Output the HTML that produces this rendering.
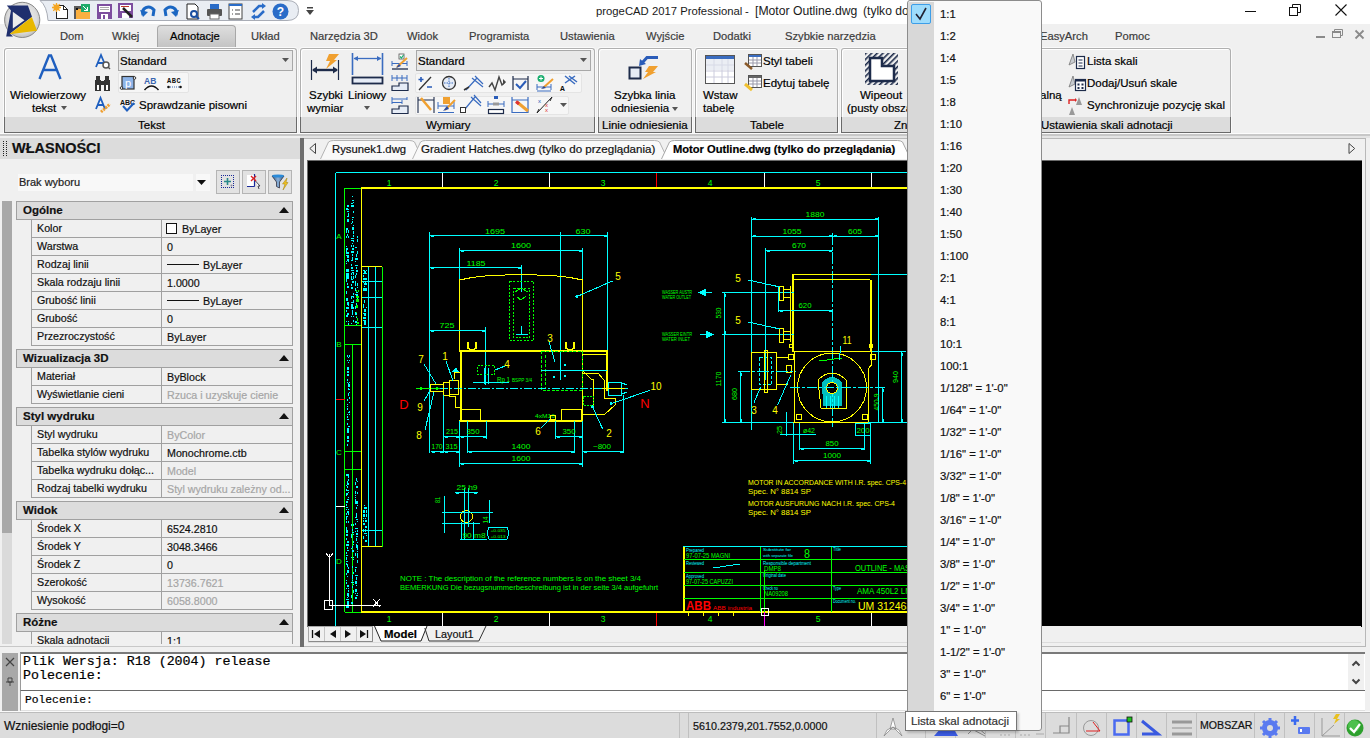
<!DOCTYPE html>
<html><head><meta charset="utf-8">
<style>
*{margin:0;padding:0;box-sizing:border-box}
html,body{width:1370px;height:738px;overflow:hidden;background:#f0f0f0;font-family:"Liberation Sans",sans-serif;font-size:11.5px;color:#000}
.t,.tab,.rt{-webkit-text-stroke:0.2px currentColor}
.a{position:absolute}
.t{position:absolute;white-space:nowrap;line-height:1}
.tab{position:absolute;top:31px;font-size:11.2px;color:#3c3c3c;white-space:nowrap;line-height:1}
.pnl{position:absolute;top:48px;height:85px;background:#f0f0f0;border:1px solid #b0b0b0;border-bottom-color:#6a6a6a;border-radius:3px 3px 0 0;box-shadow:inset 1px 1px #fff,0 0 0 1px #fafafa}
.pnl .lb{position:absolute;left:-1px;right:-1px;bottom:-1px;height:16px;background:#dcdcdc;border:1px solid #6a6a6a;border-top:none}
.rt{position:absolute;white-space:nowrap;line-height:1;font-size:11.5px;color:#000}
svg{position:absolute;overflow:visible}
</style></head><body>
<!-- ===== TITLE BAR ===== -->
<div class="a" style="left:0;top:0;width:1370px;height:24px;background:#fff"></div>
<div class="a" style="left:0;top:24px;width:1370px;height:24px;background:#f0f0f0"></div>
<!-- QAT -->
<svg style="left:0;top:0" width="320" height="24" viewBox="0 0 320 24"><path d="M40 0.5 H287 Q298.5 0.5 298.5 10.5 Q298.5 20.5 287 20.5 H48 Q47 6 40 0.5 Z" fill="#e9edf3" stroke="#a9adb6" stroke-width="1"/></svg>
<svg style="left:0;top:0" width="48" height="42" viewBox="0 0 48 42">
 <defs><radialGradient id="ab" cx="50%" cy="45%" r="55%"><stop offset="0" stop-color="#f4f4f4"/><stop offset="0.75" stop-color="#dcdcdc"/><stop offset="1" stop-color="#bdbdbd"/></radialGradient></defs>
 <circle cx="22.2" cy="19.9" r="17.6" fill="url(#ab)" stroke="#8a8a8a" stroke-width="1"/>
 <path d="M6.8 5.4 L27.9 5.4 L32 16.8 L10 33.5 L13 36.6 H6.2 L11 10.5 Z" fill="#1f2f6e"/>
 <path d="M12.8 11.7 L24.5 20.2 L12.8 28.5 Z" fill="#ececec"/>
 <path d="M31.9 17.1 L37 30.8 L9.4 34.2 Z" fill="#e8b800"/>
</svg>

<!-- qat icons -->
<svg style="left:45px;top:0" width="95" height="24" viewBox="0 0 95 24" shape-rendering="crispEdges">
 <path d="M11.5 5.5 H18.5 L22.5 9.5 V18.5 H11.5 Z" fill="#fff" stroke="#222"/>
 <path d="M18.5 5.5 V9.5 H22.5" fill="none" stroke="#222"/>
 <g shape-rendering="geometricPrecision"><circle cx="11.5" cy="7.5" r="3" fill="#f5a623"/><path d="M11.5 3 V12 M7 7.5 H16 M8.3 4.3 L14.7 10.7 M14.7 4.3 L8.3 10.7" stroke="#f5a623" stroke-width="1.3"/></g>
 <rect x="29" y="6" width="16" height="13" fill="#595959"/>
 <rect x="31" y="9" width="14" height="10" fill="#fbb040"/>
 <rect x="31" y="8" width="2" height="2" fill="#111"/>
 <rect x="36" y="4" width="9" height="8" fill="#1faa6a"/>
 <path d="M38 6 L42 10 M42 7 V10 H39" stroke="#fff" fill="none"/>
 <rect x="52" y="4" width="15" height="15" fill="#7d4e9f"/>
 <rect x="54" y="6" width="11" height="6" fill="#fff"/>
 <rect x="55" y="7" width="9" height="1" fill="#aaa"/><rect x="55" y="9" width="9" height="1" fill="#aaa"/>
 <rect x="56" y="14" width="7" height="5" fill="#fff"/><rect x="58" y="15" width="2" height="4" fill="#7d4e9f"/>
 <rect x="73" y="3" width="15" height="15" fill="#7d4e9f"/>
 <rect x="75" y="5" width="11" height="6" fill="#fff"/>
 <rect x="76" y="6" width="8" height="1" fill="#c0392b"/>
 <rect x="77" y="13" width="7" height="5" fill="#fff"/>
 <path d="M78 8 L87 17" stroke="#222" stroke-width="2.5" shape-rendering="geometricPrecision"/>
</svg>
<svg style="left:140px;top:4px" width="17" height="14" viewBox="0 0 17 14"><path d="M3 11 C1 4 9 0 14 6 L13 12" stroke="#1a66c2" stroke-width="3" fill="none"/><path d="M0 6 L3 13 L8 8 Z" fill="#1a66c2"/></svg>
<svg style="left:162px;top:4px" width="17" height="14" viewBox="0 0 17 14"><path d="M14 11 C16 4 8 0 3 6 L4 12" stroke="#1a66c2" stroke-width="3" fill="none"/><path d="M17 6 L14 13 L9 8 Z" fill="#1a66c2"/></svg>
<svg style="left:186px;top:3px" width="15" height="17" viewBox="0 0 15 17"><path d="M1 1 H9 L12 4 V16 H1 Z" fill="#fff" stroke="#222"/><circle cx="8" cy="11" r="3" fill="none" stroke="#1a4fa0" stroke-width="2"/><path d="M10 13 L13 16" stroke="#1a4fa0" stroke-width="2"/></svg>
<svg style="left:206px;top:3px" width="17" height="17" viewBox="0 0 17 17"><rect x="4" y="1" width="9" height="5" fill="#2a6cc8"/><rect x="1" y="6" width="15" height="7" rx="1" fill="#555"/><rect x="4" y="11" width="9" height="5" fill="#fff" stroke="#666"/></svg>
<svg style="left:228px;top:3px" width="15" height="17" viewBox="0 0 15 17"><rect x="1" y="1" width="13" height="15" fill="#fff" stroke="#444"/><rect x="1" y="1" width="13" height="2" fill="#2a6cc8"/><path d="M4 7 H5 M7 7 H12 M4 11 H5 M7 11 H12" stroke="#444"/></svg>
<svg style="left:250px;top:3px" width="17" height="17" viewBox="0 0 17 17"><path d="M3 9 L9 3 H13" stroke="#2a6cc8" stroke-width="2.5" fill="none"/><path d="M12 0 L16 3 L12 6 Z" fill="#2a6cc8"/><path d="M14 8 L8 14 H4" stroke="#2a6cc8" stroke-width="2.5" fill="none"/><path d="M5 11 L1 14 L5 17 Z" fill="#2a6cc8"/></svg>
<svg style="left:272px;top:3px" width="17" height="17" viewBox="0 0 17 17"><circle cx="8.5" cy="8.5" r="8" fill="#2a6cc8"/><text x="8.5" y="13" font-family="Liberation Sans" font-weight="bold" font-size="12" fill="#fff" text-anchor="middle">?</text></svg>
<svg style="left:306px;top:7px" width="8" height="9" viewBox="0 0 8 9"><rect x="1" y="0" width="6" height="1.5" fill="#444"/><path d="M0 3 H8 L4 8 Z" fill="#444"/></svg>
<div class="t" style="left:596px;top:5.5px;font-size:11.3px;color:#1a1a1a;-webkit-text-stroke:0">progeCAD 2017 Professional</div><div class="t" style="left:745px;top:5.5px;font-size:11.3px;color:#1a1a1a;-webkit-text-stroke:0">-</div><div class="t" style="left:755px;top:5px;font-size:12.2px;color:#1a1a1a;-webkit-text-stroke:0">[Motor Outline.dwg</div><div class="t" style="left:863px;top:5px;font-size:12.1px;color:#1a1a1a;-webkit-text-stroke:0">(tylko do przeglądania)]</div>
<!-- window controls -->
<div class="a" style="left:1245px;top:11px;width:11px;height:1px;background:#111"></div>
<svg style="left:1289px;top:4px" width="12" height="12" viewBox="0 0 12 12"><rect x="0.5" y="3.5" width="8" height="8" fill="none" stroke="#111"/><path d="M3.5 3.5 V0.5 H11.5 V8.5 H8.5" fill="none" stroke="#111"/></svg>
<svg style="left:1335px;top:4px" width="12" height="12" viewBox="0 0 12 12"><path d="M0.5 0.5 L11.5 11.5 M11.5 0.5 L0.5 11.5" stroke="#111" stroke-width="1.1"/></svg>

<!-- ===== RIBBON TABS ===== -->

<div class="a" style="left:157px;top:25px;width:79px;height:22px;background:linear-gradient(#dedede,#c4c4c4);border:1px solid #a8a8a8;border-bottom:none;border-radius:4px 4px 0 0"></div>
<div class="tab" style="left:60px">Dom</div>
<div class="tab" style="left:112px">Wklej</div>
<div class="tab" style="left:170px;color:#000">Adnotacje</div>
<div class="tab" style="left:251px">Układ</div>
<div class="tab" style="left:310px">Narzędzia 3D</div>
<div class="tab" style="left:407px">Widok</div>
<div class="tab" style="left:469px">Programista</div>
<div class="tab" style="left:560px">Ustawienia</div>
<div class="tab" style="left:646px">Wyjście</div>
<div class="tab" style="left:713px">Dodatki</div>
<div class="tab" style="left:785px">Szybkie narzędzia</div>
<div class="tab" style="left:1040px">EasyArch</div>
<div class="tab" style="left:1115px">Pomoc</div>
<!-- mdi controls -->
<div class="a" style="left:1316px;top:36px;width:9px;height:2px;background:#8a8a8a"></div>
<svg style="left:1332px;top:29px" width="11" height="9" viewBox="0 0 11 9"><rect x="0.5" y="2.5" width="8" height="6" fill="none" stroke="#8a8a8a"/><rect x="0.5" y="2.5" width="8" height="1.5" fill="#8a8a8a"/><path d="M2.5 2.5 V0.5 H10.5 V6.5 H8.5" fill="none" stroke="#8a8a8a"/></svg>
<svg style="left:1355px;top:30px" width="9" height="9" viewBox="0 0 9 9"><path d="M0.5 0.5 L8.5 8.5 M8.5 0.5 L0.5 8.5" stroke="#8a8a8a" stroke-width="1.8"/></svg>
<!-- ===== RIBBON BODY ===== -->
<div class="a" style="left:0;top:133px;width:1370px;height:1px;background:#fcfcfc"></div>
<div class="a" style="left:0;top:134px;width:1370px;height:2px;background:#c8c8c8"></div>
<div class="a" style="left:0;top:136px;width:1370px;height:2px;background:#e4e4e4"></div>
<!-- Tekst panel -->
<div class="pnl" style="left:4px;width:293px"><div class="lb"></div></div>
<div class="rt" style="left:138px;top:120px">Tekst</div>
<svg style="left:38px;top:54px" width="24" height="26" viewBox="0 0 24 26"><path d="M1.5 25 L11 1.5 H13 L22.5 25 M5.5 16 H18.5" stroke="#1f5fbf" stroke-width="2.4" fill="none"/></svg>
<div class="rt" style="left:10px;top:90px">Wielowierzowy</div>
<div class="rt" style="left:32px;top:103px">tekst</div>
<svg style="left:61px;top:106px" width="6" height="4"><path d="M0 0 H6 L3 4 Z" fill="#555"/></svg>
<svg style="left:95px;top:54px" width="16" height="15" viewBox="0 0 16 15"><path d="M1 13 L6 1 L11 13 M3 9 H9" stroke="#1f5fbf" stroke-width="1.8" fill="none"/><circle cx="11" cy="11" r="3" fill="#fff" stroke="#555" stroke-width="1.5"/><path d="M13 13 L15 15" stroke="#555" stroke-width="1.5"/></svg>
<svg style="left:94px;top:75px" width="17" height="16" viewBox="0 0 17 16"><rect x="1" y="5" width="6" height="11" fill="#333"/><rect x="10" y="5" width="6" height="11" fill="#333"/><rect x="2" y="1" width="4" height="4" fill="#333"/><rect x="11" y="1" width="4" height="4" fill="#333"/><rect x="6" y="6" width="5" height="4" fill="#333"/><rect x="3" y="10" width="2" height="5" fill="#fff"/><rect x="12" y="10" width="2" height="5" fill="#fff"/></svg>
<svg style="left:95px;top:97px" width="17" height="16" viewBox="0 0 17 16"><path d="M1 12 L5.5 1 L10 12 M3 8 H8" stroke="#1f5fbf" stroke-width="1.8" fill="none"/><path d="M6 15 L15 7" stroke="#f0a030" stroke-width="3" stroke-dasharray="2 1"/></svg>
<div class="a" style="left:118px;top:50px;width:175px;height:21px;background:#e8e8e8;border:1px solid #a8a8a8"></div>
<div class="rt" style="left:120px;top:56px">Standard</div>
<svg style="left:282px;top:58px" width="7" height="4"><path d="M0 0 H7 L3.5 4 Z" fill="#555"/></svg>
<div class="a" style="left:118px;top:72px;width:71px;height:21px;background:#f6f6f6;border:1px solid #e4e4e4;border-radius:2px"></div>
<svg style="left:120px;top:75px" width="16" height="16" viewBox="0 0 16 16"><rect x="2" y="1.5" width="12" height="12.5" fill="#8db4e8" stroke="#333" stroke-width="1.2"/><text x="8" y="11.5" font-family="Liberation Sans" font-size="11" fill="#fff" text-anchor="middle">p</text><circle cx="1.5" cy="13" r="1.3" fill="#fff" stroke="#333"/><circle cx="14.5" cy="3" r="1.3" fill="#fff" stroke="#333"/></svg>
<svg style="left:143px;top:75px" width="17" height="16" viewBox="0 0 17 16"><text x="1" y="9" font-family="Liberation Sans" font-weight="bold" font-size="8.5" fill="#3a66b0">AB</text><path d="M1.5 15 Q8.5 7 15.5 15" stroke="#111" stroke-width="1.4" fill="none"/></svg>
<svg style="left:166px;top:75px" width="18" height="16" viewBox="0 0 18 16"><text x="1" y="8" font-family="Liberation Mono" font-weight="bold" font-size="7" fill="#111" letter-spacing="0.5">ABC</text><circle cx="2.5" cy="12" r="1.3" fill="#111"/><circle cx="14.5" cy="12" r="1.3" fill="#111"/><path d="M4 12 H13" stroke="#3a66b0" stroke-dasharray="1 1"/></svg>
<svg style="left:120px;top:98px" width="16" height="14" viewBox="0 0 16 14"><text x="0" y="6.5" font-family="Liberation Sans" font-weight="bold" font-size="7" fill="#111">ABC</text><path d="M3 8 L7 12.5 L14 5" stroke="#1f5fbf" stroke-width="2" fill="none"/></svg>
<div class="rt" style="left:139px;top:100px">Sprawdzanie pisowni</div>

<!-- Wymiary panel -->
<div class="pnl" style="left:300px;width:295px"><div class="lb"></div></div>
<div class="rt" style="left:426px;top:120px">Wymiary</div>
<svg style="left:310px;top:53px" width="30" height="30" viewBox="0 0 30 30"><path d="M1.5 7 V27 M28.5 7 V27" stroke="#1d2b4a" stroke-width="1.2"/><path d="M3 17 H27" stroke="#1d2b4a" stroke-width="2.4"/><path d="M2 17 L7 13.5 V20.5 Z M28 17 L23 13.5 V20.5 Z" fill="#1d2b4a"/><path d="M19 1 H29 L24 7 H27 L16 16 L20 8 H16 Z" fill="#f0a030"/></svg>
<svg style="left:351px;top:53px" width="33" height="32" viewBox="0 0 33 32"><path d="M1.5 0 V22 M31.5 0 V22" stroke="#3a6cc0" stroke-width="1.6"/><path d="M3 5.5 H30" stroke="#3a6cc0" stroke-width="1.3"/><path d="M2.5 5.5 L7 3 V8 Z M30.5 5.5 L26 3 V8 Z" fill="#3a6cc0"/><rect x="1.5" y="24.5" width="30" height="6" fill="#e6ecf6" stroke="#1d2b4a" stroke-width="1.8"/></svg>
<div class="rt" style="left:309px;top:90px">Szybki</div>
<div class="rt" style="left:307px;top:103px">wymiar</div>
<div class="rt" style="left:348px;top:90px">Liniowy</div>
<svg style="left:364px;top:106px" width="6" height="4"><path d="M0 0 H6 L3 4 Z" fill="#555"/></svg>
<svg style="left:391px;top:53px" width="18" height="17" viewBox="0 0 18 17"><rect x="8" y="1" width="5" height="5" fill="#fff" stroke="#555" stroke-width="0.8"/><path d="M9 3.5 L10.5 5 L12.5 2" stroke="#1aae6f" stroke-width="1.2" fill="none"/><path d="M1 8 V13 M16 8 V13 M1 10.5 H16" stroke="#3a6cc0"/><path d="M1 16 H17" stroke="#1d2b4a" stroke-width="1.3"/><path d="M6 14 L16 5" stroke="#f0a030" stroke-width="2"/><path d="M5 15 L8 11 L10 13 Z" fill="#2a4ca0"/></svg>
<svg style="left:391px;top:74px" width="18" height="17" viewBox="0 0 18 17"><path d="M1 1 V7 M6 1 V7 M11 1 V7 M16 1 V7 M1 4 H16" stroke="#3a6cc0"/><path d="M1 16.5 H17 V9 H8 V12 H1 Z" fill="#e6ecf6" stroke="#1d2b4a" stroke-width="1.2"/></svg>
<svg style="left:391px;top:97px" width="18" height="17" viewBox="0 0 18 17"><path d="M1 0 V7 M16 0 V3 M11 3 V7 M1 2 H16 M1 5.5 H11" stroke="#3a6cc0"/><path d="M1 16.5 H17 V9 H8 V12 H1 Z" fill="#e6ecf6" stroke="#1d2b4a" stroke-width="1.2"/></svg>
<div class="a" style="left:416px;top:50px;width:175px;height:21px;background:#e8e8e8;border:1px solid #a8a8a8"></div>
<div class="rt" style="left:418px;top:56px">Standard</div>
<svg style="left:580px;top:58px" width="7" height="4"><path d="M0 0 H7 L3.5 4 Z" fill="#555"/></svg>
<div class="a" style="left:415px;top:73px;width:167px;height:20px;background:#f6f6f6;border:1px solid #e4e4e4;border-radius:2px"></div>
<div class="a" style="left:415px;top:96px;width:154px;height:19px;background:#f6f6f6;border:1px solid #e4e4e4;border-radius:2px"></div>
<svg style="left:417px;top:75px" width="170" height="40" viewBox="0 0 170 40">
 <!-- row1 -->
 <path d="M2 15 L14 2" stroke="#333" stroke-width="1.3"/><path d="M4 2 V7 M1.5 4.5 H6.5 M10 12 H15" stroke="#2a5cb8" stroke-width="1.6"/>
 <circle cx="32" cy="8" r="6.5" fill="#e6ecf6" stroke="#333" stroke-width="1.3"/><path d="M32 3 V13 M27 8 H37" stroke="#3a6cc0" stroke-dasharray="1.5 1"/>
 <path d="M49 15 L60 3 M55 3 L66 12 M58 1 L66 9" stroke="#3a6cc0" stroke-width="1.2"/><path d="M47 15 L52 12" stroke="#333" stroke-width="1.5"/>
 <path d="M72 12 L75 8 L78 15 L82 2 L85 10 L88 7" stroke="#444" stroke-width="1.4" fill="none"/><path d="M89 7 L86 4 V10 Z" fill="#444"/>
 <path d="M96 1 V15 M111 1 V15 M96 4 H111" stroke="#1d2b4a" stroke-width="1.2"/><path d="M99 9 L103 13 L109 6" stroke="#2a5cb8" stroke-width="2" fill="none"/>
 <path d="M120 9 V15 M134 9 V15 M120 12 H134 M120 16 H134" stroke="#3a6cc0"/><circle cx="124" cy="3.5" r="3.5" fill="#1aae6f"/><path d="M124 1.5 V5.5 M122 3.5 H126" stroke="#fff"/><path d="M126 13 L136 4" stroke="#f0a030" stroke-width="2"/><path d="M124 14 L127 11 L129 13 Z" fill="#2a4ca0"/>
 <path d="M148 1 L158 9 M152 1 L160 7 M148 8 L158 1" stroke="#3a6cc0" stroke-width="1.5"/><text x="143" y="16" font-family="Liberation Mono" font-weight="bold" font-size="8" fill="#111">A</text>
 <!-- row2 -->
 <path d="M1 22 V38 M17 22 V38 M1 25 H17" stroke="#1d2b4a" stroke-width="1.1"/><path d="M4 23 L14 35" stroke="#f0a030" stroke-width="2.5"/>
 <rect x="26" y="22" width="7" height="7" fill="#f0a030"/><path d="M21 27 V34 M37 27 V34 M21 31 H37 M21 37.5 H37" stroke="#3a6cc0"/><path d="M28 35 L38 25" stroke="#f0a030" stroke-width="2"/><path d="M26 36 L30 31 L32 34 Z" fill="#2a4ca0"/>
 <path d="M48 34 L58 22 M54 22 L64 31 M57 20 L64 28" stroke="#3a6cc0" stroke-width="1.2"/><rect x="43.5" y="32.5" width="5" height="5" fill="#fff" stroke="#333"/>
 <rect x="77" y="21" width="4" height="3" fill="#2a5cb8"/><path d="M71 26 V32 M87 26 V32 M71 29 H87" stroke="#3a6cc0"/><rect x="76" y="27.5" width="6" height="3" fill="#999"/><rect x="71.5" y="34.5" width="15" height="4" fill="#fff" stroke="#1d2b4a" stroke-width="1.2"/>
 <path d="M95 22 V38 M111 22 V38 M95 25 H111 M95 37.5 H111" stroke="#3a6cc0" stroke-width="1.2"/><path d="M100 27 L111 36" stroke="#f0a030" stroke-width="3"/><path d="M99 26.5 L102 29" stroke="#d33" stroke-width="3"/>
 <path d="M120 38 L135 22" stroke="#222" stroke-width="1"/><path d="M120 38 L122 34 M135 22 L133 26" stroke="#222"/><text x="121" y="28" font-family="Liberation Sans" font-size="6" fill="#2a5cb8">x</text><text x="128" y="37" font-family="Liberation Sans" font-size="6" fill="#d33">x</text><text x="128" y="32" font-family="Liberation Sans" font-size="6" fill="#d33">x</text>
 <path d="M143 28 H150 L146.5 32 Z" fill="#555"/>
</svg>

<!-- Linie odniesienia -->
<div class="pnl" style="left:598px;width:94px"><div class="lb"></div></div>
<div class="rt" style="left:602px;top:120px">Linie odniesienia</div>
<svg style="left:628px;top:56px" width="32" height="28" viewBox="0 0 32 28"><rect x="1.5" y="11.5" width="11" height="11" fill="#e6ecf6" stroke="#1d2b4a" stroke-width="2"/><path d="M30 1.5 H19 L14 7" stroke="#2a5cb8" stroke-width="3" fill="none"/><path d="M11 10 L12 3 L18 8 Z" fill="#2a5cb8"/><path d="M21 10 H30 L25 16 H28 L15 23 L20 16 H17 Z" fill="#f0a030"/></svg>
<div class="rt" style="left:614px;top:90px">Szybka linia</div>
<div class="rt" style="left:611px;top:103px">odniesienia</div>
<svg style="left:672px;top:107px" width="6" height="4"><path d="M0 0 H6 L3 4 Z" fill="#555"/></svg>

<!-- Tabele -->
<div class="pnl" style="left:695px;width:143px"><div class="lb"></div></div>
<div class="rt" style="left:750px;top:120px">Tabele</div>
<svg style="left:705px;top:55px" width="30" height="29" viewBox="0 0 30 29"><rect x="0.5" y="0.5" width="29" height="28" fill="#fff" stroke="#555"/><rect x="1" y="1" width="28" height="3" fill="#3a6cc0"/><path d="M1 10 H29 M1 16 H29 M1 22 H29 M9 4 V28 M17 4 V28 M23 4 V28" stroke="#ccd" /><rect x="1" y="4" width="28" height="11" fill="#dde3ec" opacity="0.6"/></svg>
<div class="rt" style="left:703px;top:90px">Wstaw</div>
<div class="rt" style="left:703px;top:103px">tabelę</div>
<svg style="left:744px;top:54px" width="19" height="17" viewBox="0 0 19 17"><rect x="4.5" y="0.5" width="13" height="12" fill="#fff" stroke="#555"/><rect x="5" y="1" width="12" height="2" fill="#3a6cc0"/><path d="M5 6 H17 M5 9 H17 M9 3 V12 M13 3 V12" stroke="#99a"/><path d="M1 9 L8 15" stroke="#8a5a2a" stroke-width="2.5"/></svg>
<svg style="left:744px;top:75px" width="19" height="17" viewBox="0 0 19 17"><rect x="4.5" y="0.5" width="13" height="12" fill="#fff" stroke="#555"/><rect x="5" y="1" width="12" height="2" fill="#666"/><path d="M5 6 H17 M5 9 H17 M9 3 V12 M13 3 V12" stroke="#99a"/><path d="M1 9 L8 15" stroke="#f0c030" stroke-width="3"/></svg>
<div class="rt" style="left:763px;top:56px">Styl tabeli</div>
<div class="rt" style="left:763px;top:78px">Edytuj tabelę</div>

<!-- Znaczniki (partial) -->
<div class="pnl" style="left:841px;width:150px"><div class="lb"></div></div>
<svg style="left:865px;top:53px" width="33" height="32" viewBox="0 0 33 32"><defs><pattern id="hp" width="4" height="4" patternUnits="userSpaceOnUse" patternTransform="rotate(45)"><rect width="1.6" height="4" fill="#1d2b4a"/></pattern></defs><rect x="0" y="0" width="33" height="32" fill="url(#hp)"/><path d="M5 5 H17 V13 H29 V28 H5 Z" fill="#fff" stroke="#1d2b4a" stroke-width="2.5"/></svg>
<div class="rt" style="left:860px;top:90px">Wipeout</div>
<div class="rt" style="left:847px;top:103px">(pusty obszar)</div>
<div class="rt" style="left:894px;top:120px">Znaczniki</div>
<!-- Ustawienia skali adnotacji -->
<div class="pnl" style="left:995px;width:236px"><div class="lb"></div></div>
<div class="rt" style="left:1041px;top:120px">Ustawienia skali adnotacji</div>
<div class="rt" style="left:1040px;top:90px">alną</div>
<svg style="left:1068px;top:53px" width="18" height="16" viewBox="0 0 18 16"><path d="M5 1 L7 9 L1 12 Z" fill="#c8ccd0" stroke="#777" stroke-width="0.8"/><rect x="8.5" y="3.5" width="8" height="12" fill="#fff" stroke="#1d2b4a" stroke-width="1.2"/><path d="M10.5 7 H14.5 M10.5 10 H14.5 M10.5 13 H14.5" stroke="#1d2b4a"/></svg>
<svg style="left:1068px;top:75px" width="18" height="16" viewBox="0 0 18 16"><path d="M5 1 L7 9 L1 12 Z" fill="#c8ccd0" stroke="#777" stroke-width="0.8"/><rect x="7.5" y="4.5" width="10" height="11" fill="#fff" stroke="#1d2b4a" stroke-width="1.2"/><rect x="7.5" y="4.5" width="10" height="2" fill="#1d2b4a"/><path d="M9.5 8.5 h2 v2 h-2z M13.5 8.5 h2 v2 h-2z M9.5 12 h2 v2 h-2z M13.5 12 h2 v2 h-2z" fill="#1d2b4a"/></svg>
<svg style="left:1067px;top:96px" width="18" height="20" viewBox="0 0 18 20"><path d="M2 8 V4 H8" stroke="#d22" stroke-width="1.4" fill="none"/><path d="M8 2 L10 4 L8 6 Z" fill="#d22"/><path d="M12 1 L15 9 L9 9 Z" fill="#999"/><path d="M5 11 L8 19 L2 19 Z" fill="#999"/></svg>
<div class="rt" style="left:1087px;top:56px">Lista skali</div>
<div class="rt" style="left:1087px;top:78px">Dodaj/Usuń skale</div>
<div class="rt" style="left:1087px;top:100px">Synchronizuje pozycję skal</div>
<!-- ===== PROPERTIES ===== -->
<div class="a" style="left:0;top:136px;width:300px;height:516px;background:#f0f0f0"></div>
<div class="a" style="left:0;top:138px;width:300px;height:21px;background:#dcdcdc"></div>
<div class="a" style="left:3px;top:141px;width:4px;height:15px;background:repeating-linear-gradient(#222 0 1px,transparent 1px 2px);-webkit-mask:repeating-linear-gradient(90deg,#000 0 1px,transparent 1px 3px)"></div>
<div class="t" style="left:12px;top:141px;font-size:14.5px;font-weight:bold;color:#111">WŁASNOŚCI</div>
<div class="a" style="left:18px;top:174px;width:175px;height:17px;background:#f8f8f8"></div>
<div class="a" style="left:196px;top:174px;width:14px;height:17px;background:#f8f8f8"></div>
<div class="t" style="left:19px;top:177px;font-size:11px;color:#222">Brak wyboru</div>
<svg style="left:197px;top:180px" width="9" height="5"><path d="M0 0 H9 L4.5 5 Z" fill="#111"/></svg>
<div class="a" style="left:216px;top:170px;width:24px;height:24px;background:#e2e2e2;border:1px solid #b4b4b4"></div>
<div class="a" style="left:242px;top:170px;width:24px;height:24px;background:#e2e2e2;border:1px solid #b4b4b4"></div>
<div class="a" style="left:268px;top:170px;width:24px;height:24px;background:#e2e2e2;border:1px solid #b4b4b4"></div>
<svg style="left:219px;top:173px" width="18" height="18" viewBox="0 0 18 18"><rect x="2" y="2" width="1" height="1" fill="#1a2a9a"/><rect x="2" y="14" width="1" height="1" fill="#1a2a9a"/><rect x="4" y="2" width="1" height="1" fill="#1a2a9a"/><rect x="4" y="14" width="1" height="1" fill="#1a2a9a"/><rect x="6" y="2" width="1" height="1" fill="#1a2a9a"/><rect x="6" y="14" width="1" height="1" fill="#1a2a9a"/><rect x="8" y="2" width="1" height="1" fill="#1a2a9a"/><rect x="8" y="14" width="1" height="1" fill="#1a2a9a"/><rect x="10" y="2" width="1" height="1" fill="#1a2a9a"/><rect x="10" y="14" width="1" height="1" fill="#1a2a9a"/><rect x="12" y="2" width="1" height="1" fill="#1a2a9a"/><rect x="12" y="14" width="1" height="1" fill="#1a2a9a"/><rect x="14" y="2" width="1" height="1" fill="#1a2a9a"/><rect x="14" y="14" width="1" height="1" fill="#1a2a9a"/><rect x="2" y="4" width="1" height="1" fill="#1a2a9a"/><rect x="14" y="4" width="1" height="1" fill="#1a2a9a"/><rect x="2" y="6" width="1" height="1" fill="#1a2a9a"/><rect x="14" y="6" width="1" height="1" fill="#1a2a9a"/><rect x="2" y="8" width="1" height="1" fill="#1a2a9a"/><rect x="14" y="8" width="1" height="1" fill="#1a2a9a"/><rect x="2" y="10" width="1" height="1" fill="#1a2a9a"/><rect x="14" y="10" width="1" height="1" fill="#1a2a9a"/><rect x="2" y="12" width="1" height="1" fill="#1a2a9a"/><rect x="14" y="12" width="1" height="1" fill="#1a2a9a"/><path d="M8.5 5 V12 M5 8.5 H12" stroke="#2a8a8a" stroke-width="1.6"/><circle cx="12.5" cy="12.5" r="1" fill="#889"/></svg>
<svg style="left:245px;top:173px" width="18" height="18" viewBox="0 0 18 18"><rect x="2" y="2" width="8" height="11" fill="#fff"/><path d="M2 13.5 H9.5 M9.5 1 V13.5" stroke="#1a2a9a" stroke-width="1.2"/><path d="M6 3 L11 8 M11 3 L6 8" stroke="#d22" stroke-width="1.4"/><path d="M10.5 8 L15 13 L13 13 L14 16" stroke="#334" fill="#fff" stroke-width="0.9"/></svg>
<svg style="left:271px;top:173px" width="18" height="18" viewBox="0 0 18 18"><defs><linearGradient id="fn" x1="0" x2="1"><stop offset="0" stop-color="#3a5a80"/><stop offset=".5" stop-color="#8ab0d8"/><stop offset="1" stop-color="#3a5a80"/></linearGradient></defs><path d="M1 3 H13 L8.5 9 V15 L5.5 13.5 V9 Z" fill="url(#fn)" stroke="#334" stroke-width="0.8"/><ellipse cx="7" cy="3" rx="6" ry="1.6" fill="#2a8ad8"/><path d="M12 17 L14 11 H11.5 L16 5 L15 9.5 H17 Z" fill="#f0c020" stroke="#a08010" stroke-width="0.5"/></svg>
<div class="a" style="left:2px;top:201px;width:10px;height:332px;background:#a8a8a8"></div>
<div class="a" style="left:2px;top:533px;width:10px;height:111px;background:#dadada"></div>
<div class="a" style="left:0;top:646px;width:300px;height:1px;background:#c8c8c8"></div>
<div class="a" style="left:0;top:0;width:300px;height:644px;overflow:hidden;clip-path:inset(195px 0 0 0)">
<div class="a" style="left:16px;top:201px;width:277px;height:19px;background:#dcdcdc;border:1px solid #a0a0a0"></div>
<div class="t" style="left:23px;top:205px;font-size:11.5px;font-weight:bold;color:#111">Ogólne</div>
<svg style="left:279px;top:207px" width="10" height="6"><path d="M0 6 H10 L5 0 Z" fill="#111"/></svg>
<div class="a" style="left:31px;top:219px;width:262px;height:19px;border:1px solid #a0a0a0;background:#f0f0f0"></div>
<div class="a" style="left:161px;top:219px;width:1px;height:19px;background:#a0a0a0"></div>
<div class="t" style="left:37px;top:223px;font-size:10.7px;color:#111">Kolor</div>
<div class="a" style="left:166px;top:223px;width:11px;height:11px;border:1px solid #111;background:#fff"></div>
<div class="t" style="left:182px;top:224px;font-size:10.7px;color:#111">ByLayer</div>
<div class="a" style="left:31px;top:237px;width:262px;height:19px;border:1px solid #a0a0a0;background:#f0f0f0"></div>
<div class="a" style="left:161px;top:237px;width:1px;height:19px;background:#a0a0a0"></div>
<div class="t" style="left:37px;top:241px;font-size:10.7px;color:#111">Warstwa</div>
<div class="t" style="left:167px;top:242px;font-size:10.7px;color:#111">0</div>
<div class="a" style="left:31px;top:255px;width:262px;height:19px;border:1px solid #a0a0a0;background:#f0f0f0"></div>
<div class="a" style="left:161px;top:255px;width:1px;height:19px;background:#a0a0a0"></div>
<div class="t" style="left:37px;top:259px;font-size:10.7px;color:#111">Rodzaj linii</div>
<div class="a" style="left:167px;top:264px;width:32px;height:1px;background:#111"></div>
<div class="t" style="left:203px;top:260px;font-size:10.7px;color:#111">ByLayer</div>
<div class="a" style="left:31px;top:273px;width:262px;height:19px;border:1px solid #a0a0a0;background:#f0f0f0"></div>
<div class="a" style="left:161px;top:273px;width:1px;height:19px;background:#a0a0a0"></div>
<div class="t" style="left:37px;top:277px;font-size:10.7px;color:#111">Skala rodzaju linii</div>
<div class="t" style="left:167px;top:278px;font-size:10.7px;color:#111">1.0000</div>
<div class="a" style="left:31px;top:291px;width:262px;height:19px;border:1px solid #a0a0a0;background:#f0f0f0"></div>
<div class="a" style="left:161px;top:291px;width:1px;height:19px;background:#a0a0a0"></div>
<div class="t" style="left:37px;top:295px;font-size:10.7px;color:#111">Grubość linii</div>
<div class="a" style="left:167px;top:300px;width:32px;height:1px;background:#111"></div>
<div class="t" style="left:203px;top:296px;font-size:10.7px;color:#111">ByLayer</div>
<div class="a" style="left:31px;top:309px;width:262px;height:19px;border:1px solid #a0a0a0;background:#f0f0f0"></div>
<div class="a" style="left:161px;top:309px;width:1px;height:19px;background:#a0a0a0"></div>
<div class="t" style="left:37px;top:313px;font-size:10.7px;color:#111">Grubość</div>
<div class="t" style="left:167px;top:314px;font-size:10.7px;color:#111">0</div>
<div class="a" style="left:31px;top:327px;width:262px;height:19px;border:1px solid #a0a0a0;background:#f0f0f0"></div>
<div class="a" style="left:161px;top:327px;width:1px;height:19px;background:#a0a0a0"></div>
<div class="t" style="left:37px;top:331px;font-size:10.7px;color:#111">Przezroczystość</div>
<div class="t" style="left:167px;top:332px;font-size:10.7px;color:#111">ByLayer</div>
<div class="a" style="left:16px;top:349px;width:277px;height:19px;background:#dcdcdc;border:1px solid #a0a0a0"></div>
<div class="t" style="left:23px;top:353px;font-size:11.5px;font-weight:bold;color:#111">Wizualizacja 3D</div>
<svg style="left:279px;top:355px" width="10" height="6"><path d="M0 6 H10 L5 0 Z" fill="#111"/></svg>
<div class="a" style="left:31px;top:367px;width:262px;height:19px;border:1px solid #a0a0a0;background:#f0f0f0"></div>
<div class="a" style="left:161px;top:367px;width:1px;height:19px;background:#a0a0a0"></div>
<div class="t" style="left:37px;top:371px;font-size:10.7px;color:#111">Materiał</div>
<div class="t" style="left:167px;top:372px;font-size:10.7px;color:#111">ByBlock</div>
<div class="a" style="left:31px;top:385px;width:262px;height:19px;border:1px solid #a0a0a0;background:#f0f0f0"></div>
<div class="a" style="left:161px;top:385px;width:1px;height:19px;background:#a0a0a0"></div>
<div class="t" style="left:37px;top:389px;font-size:10.7px;color:#111">Wyświetlanie cieni</div>
<div class="t" style="left:167px;top:390px;font-size:10.7px;color:#a6a6a6">Rzuca i uzyskuje cienie</div>
<div class="a" style="left:16px;top:407px;width:277px;height:19px;background:#dcdcdc;border:1px solid #a0a0a0"></div>
<div class="t" style="left:23px;top:411px;font-size:11.5px;font-weight:bold;color:#111">Styl wydruku</div>
<svg style="left:279px;top:413px" width="10" height="6"><path d="M0 6 H10 L5 0 Z" fill="#111"/></svg>
<div class="a" style="left:31px;top:425px;width:262px;height:19px;border:1px solid #a0a0a0;background:#f0f0f0"></div>
<div class="a" style="left:161px;top:425px;width:1px;height:19px;background:#a0a0a0"></div>
<div class="t" style="left:37px;top:429px;font-size:10.7px;color:#111">Styl wydruku</div>
<div class="t" style="left:167px;top:430px;font-size:10.7px;color:#a6a6a6">ByColor</div>
<div class="a" style="left:31px;top:443px;width:262px;height:19px;border:1px solid #a0a0a0;background:#f0f0f0"></div>
<div class="a" style="left:161px;top:443px;width:1px;height:19px;background:#a0a0a0"></div>
<div class="t" style="left:37px;top:447px;font-size:10.7px;color:#111">Tabelka stylów wydruku</div>
<div class="t" style="left:167px;top:448px;font-size:10.7px;color:#111">Monochrome.ctb</div>
<div class="a" style="left:31px;top:461px;width:262px;height:19px;border:1px solid #a0a0a0;background:#f0f0f0"></div>
<div class="a" style="left:161px;top:461px;width:1px;height:19px;background:#a0a0a0"></div>
<div class="t" style="left:37px;top:465px;font-size:10.7px;color:#111">Tabelka wydruku dołąc...</div>
<div class="t" style="left:167px;top:466px;font-size:10.7px;color:#a6a6a6">Model</div>
<div class="a" style="left:31px;top:479px;width:262px;height:19px;border:1px solid #a0a0a0;background:#f0f0f0"></div>
<div class="a" style="left:161px;top:479px;width:1px;height:19px;background:#a0a0a0"></div>
<div class="t" style="left:37px;top:483px;font-size:10.7px;color:#111">Rodzaj tabelki wydruku</div>
<div class="t" style="left:167px;top:484px;font-size:10.7px;color:#a6a6a6">Styl wydruku zależny od...</div>
<div class="a" style="left:16px;top:501px;width:277px;height:19px;background:#dcdcdc;border:1px solid #a0a0a0"></div>
<div class="t" style="left:23px;top:505px;font-size:11.5px;font-weight:bold;color:#111">Widok</div>
<svg style="left:279px;top:507px" width="10" height="6"><path d="M0 6 H10 L5 0 Z" fill="#111"/></svg>
<div class="a" style="left:31px;top:519px;width:262px;height:19px;border:1px solid #a0a0a0;background:#f0f0f0"></div>
<div class="a" style="left:161px;top:519px;width:1px;height:19px;background:#a0a0a0"></div>
<div class="t" style="left:37px;top:523px;font-size:10.7px;color:#111">Środek X</div>
<div class="t" style="left:167px;top:524px;font-size:10.7px;color:#111">6524.2810</div>
<div class="a" style="left:31px;top:537px;width:262px;height:19px;border:1px solid #a0a0a0;background:#f0f0f0"></div>
<div class="a" style="left:161px;top:537px;width:1px;height:19px;background:#a0a0a0"></div>
<div class="t" style="left:37px;top:541px;font-size:10.7px;color:#111">Środek Y</div>
<div class="t" style="left:167px;top:542px;font-size:10.7px;color:#111">3048.3466</div>
<div class="a" style="left:31px;top:555px;width:262px;height:19px;border:1px solid #a0a0a0;background:#f0f0f0"></div>
<div class="a" style="left:161px;top:555px;width:1px;height:19px;background:#a0a0a0"></div>
<div class="t" style="left:37px;top:559px;font-size:10.7px;color:#111">Środek Z</div>
<div class="t" style="left:167px;top:560px;font-size:10.7px;color:#111">0</div>
<div class="a" style="left:31px;top:573px;width:262px;height:19px;border:1px solid #a0a0a0;background:#f0f0f0"></div>
<div class="a" style="left:161px;top:573px;width:1px;height:19px;background:#a0a0a0"></div>
<div class="t" style="left:37px;top:577px;font-size:10.7px;color:#111">Szerokość</div>
<div class="t" style="left:167px;top:578px;font-size:10.7px;color:#a6a6a6">13736.7621</div>
<div class="a" style="left:31px;top:591px;width:262px;height:19px;border:1px solid #a0a0a0;background:#f0f0f0"></div>
<div class="a" style="left:161px;top:591px;width:1px;height:19px;background:#a0a0a0"></div>
<div class="t" style="left:37px;top:595px;font-size:10.7px;color:#111">Wysokość</div>
<div class="t" style="left:167px;top:596px;font-size:10.7px;color:#a6a6a6">6058.8000</div>
<div class="a" style="left:16px;top:613px;width:277px;height:19px;background:#dcdcdc;border:1px solid #a0a0a0"></div>
<div class="t" style="left:23px;top:617px;font-size:11.5px;font-weight:bold;color:#111">Różne</div>
<svg style="left:279px;top:619px" width="10" height="6"><path d="M0 6 H10 L5 0 Z" fill="#111"/></svg>
<div class="a" style="left:31px;top:631px;width:262px;height:19px;border:1px solid #a0a0a0;background:#f0f0f0"></div>
<div class="a" style="left:161px;top:631px;width:1px;height:19px;background:#a0a0a0"></div>
<div class="t" style="left:37px;top:635px;font-size:10.7px;color:#111">Skala adnotacji</div>
<div class="t" style="left:167px;top:636px;font-size:10.7px;color:#111">1:1</div>
</div>
<!-- ===== DOC AREA ===== -->
<div class="a" style="left:304px;top:138px;width:1062px;height:509px;background:#f0f0f0;border:1px solid #b8b8b8;border-left:none"></div>
<div class="a" style="left:300px;top:138px;width:4px;height:509px;background:#6e6e6e"></div>
<svg style="left:309px;top:143px" width="8" height="11" viewBox="0 0 8 11"><path d="M6.5 0.5 V10.5 L0.8 5.5 Z" fill="none" stroke="#444"/></svg>
<svg style="left:1348px;top:143px" width="8" height="11" viewBox="0 0 8 11"><path d="M1 0.5 V10.5 L6.7 5.5 Z" fill="none" stroke="#444"/></svg>
<svg style="left:0;top:0" width="1370" height="170" viewBox="0 0 1370 170">
<path d="M320.5 159 L328.5 142 Q330.5 140.5 333.5 140.5 H409.5 Q412.5 140.5 414.5 142 L422.5 159" fill="#f9f9f9" stroke="#b4b4b4" stroke-width="1"/>
<path d="M412.5 159 L420.5 142 Q422.5 140.5 425.5 140.5 H654.5 Q657.5 140.5 659.5 142 L667.5 159" fill="#f9f9f9" stroke="#b4b4b4" stroke-width="1"/>
<path d="M661.5 159 L669.5 142 Q671.5 140.5 674.5 140.5 H897.5 Q900.5 140.5 902.5 142 L910.5 159" fill="#ffffff" stroke="#a8a8a8" stroke-width="1"/>
</svg>
<div class="t" style="left:332px;top:144px;font-size:11.3px;color:#111">Rysunek1.dwg</div>
<div class="t" style="left:421px;top:144px;font-size:11.55px;color:#111">Gradient Hatches.dwg (tylko do przeglądania)</div>
<div class="t" style="left:673px;top:144px;font-size:11.15px;font-weight:bold;color:#000">Motor Outline.dwg (tylko do przeglądania)</div>
<div class="a" style="left:307px;top:160px;width:1055px;height:467px;background:#000;border-top:1px solid #6a6a6a;border-left:1px solid #6a6a6a"></div>
<div class="a" style="left:308px;top:626px;width:1053px;height:18px;background:#f0f0f0"></div>
<div class="a" style="left:308px;top:642px;width:1053px;height:1px;background:#dcdcdc"></div>
<svg style="left:308px;top:626px" width="200" height="18" viewBox="0 0 200 18"><rect x="0.5" y="0.5" width="64" height="15" fill="#f0f0f0" stroke="#a8a8a8"/><path d="M1 15.5 H64.5 V1" stroke="#8a8a8a" fill="none"/><path d="M16.5 1 V15 M32.5 1 V15 M48.5 1 V15" stroke="#c4c4c4"/><path d="M4.5 4 V12" stroke="#111" stroke-width="1.3"/><path d="M12 4 V12 L6 8 Z" fill="#111"/><path d="M28 4 V12 L22 8 Z" fill="#111"/><path d="M37 4 V12 L43 8 Z" fill="#111"/><path d="M52 4 V12 L58 8 Z" fill="#111"/><path d="M59.5 4 V12" stroke="#111" stroke-width="1.3"/><path d="M66.5 0 L73 15 H113 L119 0 Z" fill="#fff" stroke="none"/><path d="M66.5 0 L73 15 H113 L119 0" fill="none" stroke="#222" stroke-width="1"/><path d="M116.8 2 L121 15 H170.8 L178 0" fill="none" stroke="#333" stroke-width="1"/></svg>
<div class="t" style="left:384px;top:629px;font-size:11.4px;font-weight:bold;color:#000">Model</div>
<div class="t" style="left:435px;top:629px;font-size:10.8px;color:#111">Layout1</div>
<!-- ===== COMMAND ===== -->
<div class="a" style="left:0;top:647px;width:1370px;height:5px;background:#f0f0f0"></div>
<div class="a" style="left:0;top:652px;width:1366px;height:60px;background:#f0f0f0"></div>
<div class="a" style="left:2px;top:653px;width:16px;height:58px;background:#a8a8a8"></div>
<svg style="left:5px;top:657px" width="10" height="10" viewBox="0 0 10 10"><path d="M1 1 L9 9 M9 1 L1 9" stroke="#444" stroke-width="1.2"/></svg>
<svg style="left:6px;top:677px" width="8" height="9" viewBox="0 0 8 9"><path d="M2 1 H6 V5 H2 Z M0 5 H8 M4 5 V9" stroke="#444" fill="none"/></svg>
<div class="a" style="left:20px;top:652px;width:1345px;height:39px;background:#fff;border-top:2px solid #7a7a7a;border-left:1px solid #9a9a9a"></div>
<div class="a" style="left:20px;top:690px;width:1345px;height:21px;background:#fff;border-top:1px solid #6a6a6a;border-left:1px solid #9a9a9a;border-bottom:1px solid #e0e0e0"></div>
<div class="a" style="left:1348px;top:654px;width:16px;height:36px;background:#f0f0f0"></div>
<svg style="left:1351px;top:660px" width="10" height="26" viewBox="0 0 10 26"><path d="M1.5 5.5 L5 2 L8.5 5.5 M1.5 19.5 L5 23 L8.5 19.5" stroke="#444" stroke-width="2" fill="none"/></svg>
<div class="t" style="left:23px;top:655px;font-family:'Liberation Mono',monospace;font-size:13.3px;color:#000;line-height:14.3px">Plik Wersja: R18 (2004) release<br>Polecenie:</div>
<div class="t" style="left:25px;top:695px;font-family:'Liberation Mono',monospace;font-size:11.3px;color:#000">Polecenie:</div>
<!-- ===== STATUS ===== -->
<div class="a" style="left:0;top:711px;width:1370px;height:1px;background:#fafafa"></div>
<div class="a" style="left:0;top:712px;width:1370px;height:26px;background:#dcdcdc;border-top:1px solid #bcbcbc"></div>
<div class="t" style="left:4px;top:720px;font-size:12px;color:#111">Wzniesienie podłogi=0</div>
<div class="a" style="left:679px;top:713px;width:1px;height:25px;background:#c0c0c0"></div>
<div class="a" style="left:688px;top:713px;width:1px;height:25px;background:#c0c0c0"></div>
<div class="a" style="left:876px;top:713px;width:1px;height:25px;background:#c0c0c0"></div>
<div class="a" style="left:925px;top:713px;width:1px;height:25px;background:#c0c0c0"></div>
<div class="a" style="left:955px;top:713px;width:1px;height:25px;background:#c0c0c0"></div>
<div class="a" style="left:985px;top:713px;width:1px;height:25px;background:#c0c0c0"></div>
<div class="a" style="left:1015px;top:713px;width:1px;height:25px;background:#c0c0c0"></div>
<div class="a" style="left:1045px;top:713px;width:1px;height:25px;background:#c0c0c0"></div>
<div class="a" style="left:1076px;top:713px;width:1px;height:25px;background:#c0c0c0"></div>
<div class="a" style="left:1106px;top:713px;width:1px;height:25px;background:#c0c0c0"></div>
<div class="a" style="left:1136px;top:713px;width:1px;height:25px;background:#c0c0c0"></div>
<div class="a" style="left:1166px;top:713px;width:1px;height:25px;background:#c0c0c0"></div>
<div class="a" style="left:1196px;top:713px;width:1px;height:25px;background:#c0c0c0"></div>
<div class="a" style="left:1254px;top:713px;width:1px;height:25px;background:#c0c0c0"></div>
<div class="a" style="left:1284px;top:713px;width:1px;height:25px;background:#c0c0c0"></div>
<div class="a" style="left:1314px;top:713px;width:1px;height:25px;background:#c0c0c0"></div>
<div class="a" style="left:1344px;top:713px;width:1px;height:25px;background:#c0c0c0"></div>
<div class="t" style="left:693px;top:721px;font-size:10.75px;color:#111">5610.2379,201.7552,0.0000</div>
<div class="t" style="left:1200px;top:720px;font-size:10.6px;color:#111">MOBSZAR</div>
<svg style="left:0;top:712px" width="1370" height="26" viewBox="0 0 1370 26"><path d="M893 6 L896 17 L890 17 Z M893 15 L902 24 L899 18 Z M893 15 L884 24 L887 18 Z" fill="#fff" stroke="#888" stroke-width="0.8"/><path d="M934 24 L948 8 L958 24 Z" fill="#3a5ae0"/><path d="M968 22 L976 14 L985 22 M970 16 L985 24" stroke="#888" fill="none"/><path d="M1000 23 H1012 M1020 23 H1030" stroke="#aaa" stroke-dasharray="2 2"/><path d="M1036 22 H1044" stroke="#aaa" stroke-width="1"/><path d="M1053 21 H1069 V5 M1060 21 V14 H1069" stroke="#888" stroke-width="1.2" fill="none"/><circle cx="1091" cy="16" r="7.5" fill="none" stroke="#999" stroke-width="1"/><path d="M1086 19 H1100 L1093 10" stroke="#e02020" fill="none" stroke-width="1"/><rect x="1114.5" y="8.5" width="14" height="14" fill="none" stroke="#4a6af0" stroke-width="2.5"/><rect x="1127" y="5" width="5" height="5" fill="#20c020" stroke="#111" stroke-width="0.8"/><path d="M1142 9 L1158 22 H1142" stroke="#3a5ae0" stroke-width="3" fill="none"/><path d="M1172 10 H1192 M1172 22 H1192" stroke="#999" stroke-width="3"/><path d="M1172 16 H1192" stroke="#aaa" stroke-width="1.5"/><circle cx="1270" cy="16" r="8" fill="#5a7af0"/><circle cx="1270" cy="16" r="3" fill="#dcdcdc"/><path d="M1270 6 V26 M1260 16 H1280 M1263 9 L1277 23 M1277 9 L1263 23" stroke="#5a7af0" stroke-width="3"/><circle cx="1270" cy="16" r="3" fill="#dcdcdc"/><path d="M1295 4 V13 M1291 8.5 H1299" stroke="#3a6af0" stroke-width="2.5"/><rect x="1298" y="15" width="12" height="7" rx="1" fill="#5a7af0"/><rect x="1300" y="17" width="2" height="3" fill="#fff"/><path d="M1322 6 V24 H1340 M1322 24 L1334 13" stroke="#999" stroke-width="1" fill="none"/><path d="M1336 2 L1340 2 L1337 7 H1340 L1334 12 L1336 7 H1333 Z" fill="#e8c020"/><circle cx="1355" cy="16" r="8.5" fill="#2ea02e"/><circle cx="1354" cy="14" r="6" fill="#4cc04c"/><path d="M1350 16 L1354 20 L1360 12" stroke="#fff" stroke-width="2.2" fill="none"/></svg>
<!-- ===== DRAWING ===== -->
<svg style="left:0;top:0" width="1370" height="738" viewBox="0 0 1370 738"><defs><clipPath id="dc"><rect x="308" y="161" width="599" height="465"/></clipPath></defs><g clip-path="url(#dc)" shape-rendering="crispEdges">
<line x1="335.5" y1="172.5" x2="1361" y2="172.5" stroke="#00ffff" stroke-width="1"/>
<line x1="335.5" y1="172.5" x2="335.5" y2="626" stroke="#00ffff" stroke-width="1"/>
<line x1="361" y1="188" x2="1361" y2="188" stroke="#ffff00" stroke-width="2"/>
<line x1="361.5" y1="188" x2="361.5" y2="612" stroke="#ffff00" stroke-width="1"/>
<line x1="361" y1="612" x2="1361" y2="612" stroke="#ffff00" stroke-width="2"/>
<line x1="344.5" y1="188" x2="361" y2="188" stroke="#00ff00" stroke-width="1"/>
<line x1="344.5" y1="188" x2="344.5" y2="612" stroke="#00ff00" stroke-width="1"/>
<line x1="345" y1="612" x2="361" y2="612" stroke="#00ff00" stroke-width="1"/>
<line x1="442.5" y1="173" x2="442.5" y2="187" stroke="#ffffff" stroke-width="1"/>
<line x1="442.5" y1="613" x2="442.5" y2="626" stroke="#ffffff" stroke-width="1"/>
<line x1="549.5" y1="173" x2="549.5" y2="187" stroke="#ffffff" stroke-width="1"/>
<line x1="549.5" y1="613" x2="549.5" y2="626" stroke="#ffffff" stroke-width="1"/>
<line x1="656.5" y1="173" x2="656.5" y2="187" stroke="#ff0000" stroke-width="1"/>
<line x1="656.5" y1="613" x2="656.5" y2="626" stroke="#ff0000" stroke-width="1"/>
<line x1="764.5" y1="173" x2="764.5" y2="187" stroke="#ffffff" stroke-width="1"/>
<line x1="764.5" y1="613" x2="764.5" y2="626" stroke="#ffffff" stroke-width="1"/>
<line x1="871.5" y1="173" x2="871.5" y2="187" stroke="#ffffff" stroke-width="1"/>
<line x1="871.5" y1="613" x2="871.5" y2="626" stroke="#ffffff" stroke-width="1"/>
<text x="389" y="186" fill="#00ff00" font-family="Liberation Sans" font-size="8.5" text-anchor="middle">1</text>
<text x="389" y="622" fill="#00ff00" font-family="Liberation Sans" font-size="8.5" text-anchor="middle">1</text>
<text x="496" y="186" fill="#00ff00" font-family="Liberation Sans" font-size="8.5" text-anchor="middle">2</text>
<text x="496" y="622" fill="#00ff00" font-family="Liberation Sans" font-size="8.5" text-anchor="middle">2</text>
<text x="603" y="186" fill="#00ff00" font-family="Liberation Sans" font-size="8.5" text-anchor="middle">3</text>
<text x="603" y="622" fill="#00ff00" font-family="Liberation Sans" font-size="8.5" text-anchor="middle">3</text>
<text x="710" y="186" fill="#00ff00" font-family="Liberation Sans" font-size="8.5" text-anchor="middle">4</text>
<text x="710" y="622" fill="#00ff00" font-family="Liberation Sans" font-size="8.5" text-anchor="middle">4</text>
<text x="818" y="186" fill="#00ff00" font-family="Liberation Sans" font-size="8.5" text-anchor="middle">5</text>
<text x="818" y="622" fill="#00ff00" font-family="Liberation Sans" font-size="8.5" text-anchor="middle">5</text>
<text x="339" y="239" fill="#00ff00" font-family="Liberation Sans" font-size="8" text-anchor="middle">A</text>
<text x="339" y="347" fill="#00ff00" font-family="Liberation Sans" font-size="8" text-anchor="middle">B</text>
<text x="339" y="455" fill="#00ff00" font-family="Liberation Sans" font-size="8" text-anchor="middle">C</text>
<text x="339" y="564" fill="#00ff00" font-family="Liberation Sans" font-size="8" text-anchor="middle">D</text>
<line x1="336" y1="399.5" x2="345" y2="399.5" stroke="#ff0000" stroke-width="1"/>
<line x1="336" y1="506.5" x2="345" y2="506.5" stroke="#ffffff" stroke-width="1"/>
<rect x="347" y="205" width="1" height="2" fill="#00ffff"/>
<rect x="348" y="205" width="1" height="2" fill="#00ffff"/>
<rect x="346" y="208" width="1" height="1" fill="#00ffff"/>
<rect x="347" y="208" width="1" height="1" fill="#00ffff"/>
<rect x="346" y="209" width="1" height="1" fill="#00ffff"/>
<rect x="347" y="209" width="1" height="1" fill="#00ffff"/>
<rect x="348" y="209" width="1" height="1" fill="#00ffff"/>
<rect x="347" y="211" width="1" height="1" fill="#00ffff"/>
<rect x="348" y="211" width="1" height="1" fill="#00ffff"/>
<rect x="348" y="213" width="1" height="3" fill="#00ffff"/>
<rect x="347" y="216" width="1" height="1" fill="#00ffff"/>
<rect x="348" y="216" width="1" height="1" fill="#00ffff"/>
<rect x="347" y="219" width="1" height="3" fill="#00ffff"/>
<rect x="348" y="219" width="1" height="3" fill="#00ffff"/>
<rect x="346" y="228" width="1" height="2" fill="#00ffff"/>
<rect x="347" y="228" width="1" height="2" fill="#00ffff"/>
<rect x="346" y="230" width="1" height="3" fill="#00ffff"/>
<rect x="348" y="230" width="1" height="3" fill="#00ffff"/>
<rect x="347" y="234" width="1" height="2" fill="#00ffff"/>
<rect x="346" y="236" width="1" height="2" fill="#00ffff"/>
<rect x="348" y="236" width="1" height="2" fill="#00ffff"/>
<rect x="346" y="246" width="1" height="1" fill="#00ffff"/>
<rect x="346" y="248" width="1" height="2" fill="#00ffff"/>
<rect x="347" y="248" width="1" height="2" fill="#00ffff"/>
<rect x="346" y="250" width="1" height="2" fill="#00ffff"/>
<rect x="346" y="252" width="1" height="2" fill="#00ffff"/>
<rect x="347" y="252" width="1" height="2" fill="#00ffff"/>
<rect x="348" y="252" width="1" height="2" fill="#00ffff"/>
<rect x="346" y="255" width="1" height="1" fill="#00ffff"/>
<rect x="347" y="255" width="1" height="1" fill="#00ffff"/>
<rect x="348" y="255" width="1" height="1" fill="#00ffff"/>
<rect x="347" y="256" width="1" height="2" fill="#00ffff"/>
<rect x="348" y="256" width="1" height="2" fill="#00ffff"/>
<rect x="347" y="259" width="1" height="2" fill="#00ffff"/>
<rect x="348" y="259" width="1" height="2" fill="#00ffff"/>
<rect x="346" y="261" width="1" height="1" fill="#00ffff"/>
<rect x="348" y="261" width="1" height="1" fill="#00ffff"/>
<rect x="346" y="263" width="1" height="1" fill="#00ffff"/>
<rect x="346" y="269" width="1" height="3" fill="#00ffff"/>
<rect x="347" y="269" width="1" height="3" fill="#00ffff"/>
<rect x="348" y="269" width="1" height="3" fill="#00ffff"/>
<rect x="346" y="273" width="1" height="2" fill="#00ffff"/>
<rect x="347" y="273" width="1" height="2" fill="#00ffff"/>
<rect x="348" y="273" width="1" height="2" fill="#00ffff"/>
<rect x="346" y="275" width="1" height="1" fill="#00ffff"/>
<rect x="347" y="275" width="1" height="1" fill="#00ffff"/>
<rect x="348" y="275" width="1" height="1" fill="#00ffff"/>
<rect x="346" y="276" width="1" height="3" fill="#00ffff"/>
<rect x="347" y="276" width="1" height="3" fill="#00ffff"/>
<rect x="348" y="276" width="1" height="3" fill="#00ffff"/>
<rect x="346" y="279" width="1" height="3" fill="#00ffff"/>
<rect x="347" y="283" width="1" height="2" fill="#00ffff"/>
<rect x="347" y="286" width="1" height="2" fill="#00ffff"/>
<rect x="348" y="286" width="1" height="2" fill="#00ffff"/>
<rect x="346" y="291" width="1" height="3" fill="#00ffff"/>
<rect x="346" y="298" width="1" height="3" fill="#00ffff"/>
<rect x="347" y="298" width="1" height="3" fill="#00ffff"/>
<rect x="347" y="302" width="1" height="3" fill="#00ffff"/>
<rect x="348" y="302" width="1" height="3" fill="#00ffff"/>
<rect x="348" y="305" width="1" height="1" fill="#00ffff"/>
<rect x="346" y="307" width="1" height="2" fill="#00ffff"/>
<rect x="347" y="307" width="1" height="2" fill="#00ffff"/>
<rect x="348" y="307" width="1" height="2" fill="#00ffff"/>
<rect x="346" y="310" width="1" height="2" fill="#00ffff"/>
<rect x="347" y="313" width="1" height="2" fill="#00ffff"/>
<rect x="348" y="313" width="1" height="2" fill="#00ffff"/>
<rect x="346" y="315" width="1" height="2" fill="#00ffff"/>
<rect x="347" y="315" width="1" height="2" fill="#00ffff"/>
<rect x="346" y="321" width="1" height="1" fill="#00ffff"/>
<rect x="348" y="321" width="1" height="1" fill="#00ffff"/>
<rect x="348" y="323" width="1" height="2" fill="#00ffff"/>
<rect x="352" y="196" width="1" height="1" fill="#00ffff"/>
<rect x="352" y="200" width="1" height="1" fill="#00ffff"/>
<rect x="353" y="200" width="1" height="1" fill="#00ffff"/>
<rect x="353" y="202" width="1" height="1" fill="#00ffff"/>
<rect x="351" y="203" width="1" height="1" fill="#00ffff"/>
<rect x="352" y="203" width="1" height="1" fill="#00ffff"/>
<rect x="351" y="205" width="1" height="2" fill="#00ffff"/>
<rect x="352" y="205" width="1" height="2" fill="#00ffff"/>
<rect x="353" y="205" width="1" height="2" fill="#00ffff"/>
<rect x="353" y="211" width="1" height="2" fill="#00ffff"/>
<rect x="352" y="217" width="1" height="1" fill="#00ffff"/>
<rect x="353" y="217" width="1" height="1" fill="#00ffff"/>
<rect x="352" y="219" width="1" height="1" fill="#00ffff"/>
<rect x="352" y="221" width="1" height="2" fill="#00ffff"/>
<rect x="351" y="223" width="1" height="1" fill="#00ffff"/>
<rect x="353" y="225" width="1" height="1" fill="#00ffff"/>
<rect x="352" y="227" width="1" height="3" fill="#00ffff"/>
<rect x="353" y="227" width="1" height="3" fill="#00ffff"/>
<rect x="353" y="231" width="1" height="3" fill="#00ffff"/>
<rect x="353" y="235" width="1" height="2" fill="#00ffff"/>
<rect x="351" y="238" width="1" height="1" fill="#00ffff"/>
<rect x="352" y="238" width="1" height="1" fill="#00ffff"/>
<rect x="353" y="238" width="1" height="1" fill="#00ffff"/>
<rect x="351" y="240" width="1" height="1" fill="#00ffff"/>
<rect x="352" y="240" width="1" height="1" fill="#00ffff"/>
<rect x="353" y="240" width="1" height="1" fill="#00ffff"/>
<rect x="353" y="241" width="1" height="1" fill="#00ffff"/>
<rect x="352" y="243" width="1" height="1" fill="#00ffff"/>
<rect x="351" y="245" width="1" height="2" fill="#00ffff"/>
<rect x="353" y="245" width="1" height="2" fill="#00ffff"/>
<rect x="352" y="248" width="1" height="2" fill="#00ffff"/>
<rect x="353" y="248" width="1" height="2" fill="#00ffff"/>
<rect x="351" y="251" width="1" height="2" fill="#00ffff"/>
<rect x="352" y="251" width="1" height="2" fill="#00ffff"/>
<rect x="353" y="251" width="1" height="2" fill="#00ffff"/>
<rect x="352" y="254" width="1" height="2" fill="#00ffff"/>
<rect x="352" y="257" width="1" height="3" fill="#00ffff"/>
<rect x="351" y="260" width="1" height="1" fill="#00ffff"/>
<rect x="352" y="260" width="1" height="1" fill="#00ffff"/>
<rect x="351" y="264" width="1" height="2" fill="#00ffff"/>
<rect x="351" y="267" width="1" height="2" fill="#00ffff"/>
<rect x="352" y="267" width="1" height="2" fill="#00ffff"/>
<rect x="351" y="270" width="1" height="1" fill="#00ffff"/>
<rect x="352" y="270" width="1" height="1" fill="#00ffff"/>
<rect x="353" y="270" width="1" height="1" fill="#00ffff"/>
<rect x="352" y="272" width="1" height="1" fill="#00ffff"/>
<rect x="353" y="272" width="1" height="1" fill="#00ffff"/>
<rect x="351" y="273" width="1" height="2" fill="#00ffff"/>
<rect x="353" y="273" width="1" height="2" fill="#00ffff"/>
<rect x="351" y="276" width="1" height="3" fill="#00ffff"/>
<rect x="353" y="276" width="1" height="3" fill="#00ffff"/>
<rect x="351" y="279" width="1" height="1" fill="#00ffff"/>
<rect x="352" y="279" width="1" height="1" fill="#00ffff"/>
<rect x="352" y="281" width="1" height="2" fill="#00ffff"/>
<rect x="353" y="281" width="1" height="2" fill="#00ffff"/>
<rect x="351" y="284" width="1" height="1" fill="#00ffff"/>
<rect x="351" y="285" width="1" height="1" fill="#00ffff"/>
<rect x="351" y="287" width="1" height="2" fill="#00ffff"/>
<rect x="352" y="287" width="1" height="2" fill="#00ffff"/>
<rect x="353" y="293" width="1" height="2" fill="#00ffff"/>
<rect x="351" y="296" width="1" height="1" fill="#00ffff"/>
<rect x="352" y="296" width="1" height="1" fill="#00ffff"/>
<rect x="353" y="296" width="1" height="1" fill="#00ffff"/>
<rect x="351" y="297" width="1" height="1" fill="#00ffff"/>
<rect x="353" y="297" width="1" height="1" fill="#00ffff"/>
<rect x="351" y="298" width="1" height="1" fill="#00ffff"/>
<rect x="353" y="300" width="1" height="2" fill="#00ffff"/>
<rect x="351" y="302" width="1" height="1" fill="#00ffff"/>
<rect x="352" y="302" width="1" height="1" fill="#00ffff"/>
<rect x="353" y="302" width="1" height="1" fill="#00ffff"/>
<rect x="351" y="304" width="1" height="3" fill="#00ffff"/>
<rect x="352" y="304" width="1" height="3" fill="#00ffff"/>
<rect x="351" y="307" width="1" height="2" fill="#00ffff"/>
<rect x="352" y="307" width="1" height="2" fill="#00ffff"/>
<rect x="353" y="307" width="1" height="2" fill="#00ffff"/>
<rect x="352" y="310" width="1" height="3" fill="#00ffff"/>
<rect x="352" y="313" width="1" height="2" fill="#00ffff"/>
<rect x="351" y="316" width="1" height="1" fill="#00ffff"/>
<rect x="353" y="316" width="1" height="1" fill="#00ffff"/>
<rect x="353" y="320" width="1" height="2" fill="#00ffff"/>
<rect x="351" y="323" width="1" height="1" fill="#00ffff"/>
<rect x="357" y="236" width="1" height="2" fill="#00ffff"/>
<rect x="357" y="239" width="1" height="3" fill="#00ffff"/>
<rect x="355" y="247" width="1" height="1" fill="#00ffff"/>
<rect x="356" y="247" width="1" height="1" fill="#00ffff"/>
<rect x="357" y="251" width="1" height="3" fill="#00ffff"/>
<rect x="356" y="254" width="1" height="3" fill="#00ffff"/>
<rect x="355" y="258" width="1" height="2" fill="#00ffff"/>
<rect x="356" y="258" width="1" height="2" fill="#00ffff"/>
<rect x="357" y="258" width="1" height="2" fill="#00ffff"/>
<rect x="355" y="261" width="1" height="1" fill="#00ffff"/>
<rect x="355" y="265" width="1" height="1" fill="#00ffff"/>
<rect x="356" y="265" width="1" height="1" fill="#00ffff"/>
<rect x="357" y="265" width="1" height="1" fill="#00ffff"/>
<rect x="356" y="267" width="1" height="2" fill="#00ffff"/>
<rect x="356" y="270" width="1" height="2" fill="#00ffff"/>
<rect x="357" y="270" width="1" height="2" fill="#00ffff"/>
<rect x="356" y="273" width="1" height="2" fill="#00ffff"/>
<rect x="355" y="275" width="1" height="3" fill="#00ffff"/>
<rect x="355" y="281" width="1" height="2" fill="#00ffff"/>
<rect x="355" y="283" width="1" height="3" fill="#00ffff"/>
<rect x="357" y="283" width="1" height="3" fill="#00ffff"/>
<rect x="357" y="287" width="1" height="1" fill="#00ffff"/>
<rect x="355" y="288" width="1" height="2" fill="#00ffff"/>
<rect x="355" y="290" width="1" height="1" fill="#00ffff"/>
<rect x="356" y="292" width="1" height="1" fill="#00ffff"/>
<rect x="357" y="292" width="1" height="1" fill="#00ffff"/>
<rect x="355" y="294" width="1" height="1" fill="#00ffff"/>
<rect x="356" y="294" width="1" height="1" fill="#00ffff"/>
<rect x="357" y="294" width="1" height="1" fill="#00ffff"/>
<rect x="356" y="295" width="1" height="1" fill="#00ffff"/>
<rect x="357" y="295" width="1" height="1" fill="#00ffff"/>
<rect x="357" y="297" width="1" height="2" fill="#00ffff"/>
<rect x="356" y="300" width="1" height="2" fill="#00ffff"/>
<rect x="357" y="300" width="1" height="2" fill="#00ffff"/>
<rect x="356" y="303" width="1" height="2" fill="#00ffff"/>
<rect x="355" y="306" width="1" height="3" fill="#00ffff"/>
<rect x="355" y="312" width="1" height="3" fill="#00ffff"/>
<rect x="356" y="312" width="1" height="3" fill="#00ffff"/>
<rect x="356" y="316" width="1" height="2" fill="#00ffff"/>
<rect x="357" y="319" width="1" height="1" fill="#00ffff"/>
<rect x="355" y="321" width="1" height="2" fill="#00ffff"/>
<rect x="356" y="321" width="1" height="2" fill="#00ffff"/>
<rect x="356" y="324" width="1" height="2" fill="#00ffff"/>
<rect x="356" y="290" width="1" height="2" fill="#00ff00"/>
<rect x="358" y="290" width="1" height="2" fill="#00ff00"/>
<rect x="356" y="296" width="1" height="2" fill="#00ff00"/>
<rect x="357" y="296" width="1" height="2" fill="#00ff00"/>
<rect x="358" y="296" width="1" height="2" fill="#00ff00"/>
<rect x="356" y="299" width="1" height="3" fill="#00ff00"/>
<rect x="357" y="299" width="1" height="3" fill="#00ff00"/>
<rect x="358" y="299" width="1" height="3" fill="#00ff00"/>
<rect x="356" y="305" width="1" height="3" fill="#00ff00"/>
<rect x="357" y="305" width="1" height="3" fill="#00ff00"/>
<rect x="356" y="312" width="1" height="1" fill="#00ff00"/>
<rect x="356" y="316" width="1" height="1" fill="#00ff00"/>
<rect x="357" y="318" width="1" height="3" fill="#00ff00"/>
<rect x="357" y="322" width="1" height="2" fill="#00ff00"/>
<rect x="358" y="322" width="1" height="2" fill="#00ff00"/>
<line x1="345" y1="325.5" x2="361" y2="325.5" stroke="#00ff00" stroke-width="1"/>
<line x1="345" y1="344.5" x2="361" y2="344.5" stroke="#00ff00" stroke-width="1"/>
<line x1="352.5" y1="344.5" x2="352.5" y2="612" stroke="#00ff00" stroke-width="1"/>
<line x1="345" y1="451.5" x2="361" y2="451.5" stroke="#00ff00" stroke-width="1"/>
<line x1="345" y1="469.5" x2="361" y2="469.5" stroke="#00ff00" stroke-width="1"/>
<rect x="347" y="355" width="1" height="2" fill="#00ffff"/>
<rect x="349" y="355" width="1" height="2" fill="#00ffff"/>
<rect x="348" y="357" width="1" height="1" fill="#00ffff"/>
<rect x="347" y="360" width="1" height="1" fill="#00ffff"/>
<rect x="349" y="360" width="1" height="1" fill="#00ffff"/>
<rect x="348" y="362" width="1" height="1" fill="#00ffff"/>
<rect x="347" y="367" width="1" height="3" fill="#00ffff"/>
<rect x="348" y="367" width="1" height="3" fill="#00ffff"/>
<rect x="347" y="371" width="1" height="2" fill="#00ffff"/>
<rect x="348" y="371" width="1" height="2" fill="#00ffff"/>
<rect x="347" y="374" width="1" height="2" fill="#00ffff"/>
<rect x="348" y="374" width="1" height="2" fill="#00ffff"/>
<rect x="347" y="379" width="1" height="2" fill="#00ffff"/>
<rect x="347" y="382" width="1" height="1" fill="#00ffff"/>
<rect x="349" y="382" width="1" height="1" fill="#00ffff"/>
<rect x="348" y="383" width="1" height="1" fill="#00ffff"/>
<rect x="348" y="384" width="1" height="3" fill="#00ffff"/>
<rect x="349" y="384" width="1" height="3" fill="#00ffff"/>
<rect x="348" y="388" width="1" height="1" fill="#00ffff"/>
<rect x="348" y="389" width="1" height="1" fill="#00ffff"/>
<rect x="349" y="389" width="1" height="1" fill="#00ffff"/>
<rect x="349" y="392" width="1" height="1" fill="#00ffff"/>
<rect x="348" y="393" width="1" height="3" fill="#00ffff"/>
<rect x="349" y="397" width="1" height="2" fill="#00ffff"/>
<rect x="347" y="399" width="1" height="2" fill="#00ffff"/>
<rect x="349" y="402" width="1" height="1" fill="#00ffff"/>
<rect x="347" y="404" width="1" height="1" fill="#00ffff"/>
<rect x="347" y="406" width="1" height="1" fill="#00ffff"/>
<rect x="347" y="408" width="1" height="2" fill="#00ffff"/>
<rect x="349" y="411" width="1" height="1" fill="#00ffff"/>
<rect x="348" y="412" width="1" height="1" fill="#00ffff"/>
<rect x="349" y="412" width="1" height="1" fill="#00ffff"/>
<rect x="347" y="414" width="1" height="1" fill="#00ffff"/>
<rect x="349" y="414" width="1" height="1" fill="#00ffff"/>
<rect x="347" y="416" width="1" height="2" fill="#00ffff"/>
<rect x="347" y="419" width="1" height="1" fill="#00ffff"/>
<rect x="348" y="419" width="1" height="1" fill="#00ffff"/>
<rect x="347" y="423" width="1" height="2" fill="#00ffff"/>
<rect x="348" y="426" width="1" height="1" fill="#00ffff"/>
<rect x="349" y="426" width="1" height="1" fill="#00ffff"/>
<rect x="347" y="428" width="1" height="3" fill="#00ffff"/>
<rect x="348" y="428" width="1" height="3" fill="#00ffff"/>
<rect x="347" y="431" width="1" height="2" fill="#00ffff"/>
<rect x="348" y="431" width="1" height="2" fill="#00ffff"/>
<rect x="347" y="436" width="1" height="3" fill="#00ffff"/>
<rect x="348" y="436" width="1" height="3" fill="#00ffff"/>
<rect x="347" y="440" width="1" height="2" fill="#00ffff"/>
<rect x="348" y="440" width="1" height="2" fill="#00ffff"/>
<rect x="347" y="444" width="1" height="2" fill="#00ffff"/>
<rect x="346" y="474" width="1" height="2" fill="#00ffff"/>
<rect x="347" y="474" width="1" height="2" fill="#00ffff"/>
<rect x="348" y="474" width="1" height="2" fill="#00ffff"/>
<rect x="348" y="476" width="1" height="2" fill="#00ffff"/>
<rect x="348" y="479" width="1" height="2" fill="#00ffff"/>
<rect x="347" y="481" width="1" height="2" fill="#00ffff"/>
<rect x="347" y="483" width="1" height="2" fill="#00ffff"/>
<rect x="348" y="483" width="1" height="2" fill="#00ffff"/>
<rect x="346" y="485" width="1" height="1" fill="#00ffff"/>
<rect x="347" y="486" width="1" height="2" fill="#00ffff"/>
<rect x="346" y="489" width="1" height="1" fill="#00ffff"/>
<rect x="346" y="490" width="1" height="1" fill="#00ffff"/>
<rect x="347" y="490" width="1" height="1" fill="#00ffff"/>
<rect x="348" y="490" width="1" height="1" fill="#00ffff"/>
<rect x="348" y="492" width="1" height="1" fill="#00ffff"/>
<rect x="346" y="493" width="1" height="2" fill="#00ffff"/>
<rect x="347" y="493" width="1" height="2" fill="#00ffff"/>
<rect x="346" y="495" width="1" height="1" fill="#00ffff"/>
<rect x="348" y="497" width="1" height="1" fill="#00ffff"/>
<rect x="347" y="499" width="1" height="1" fill="#00ffff"/>
<rect x="348" y="499" width="1" height="1" fill="#00ffff"/>
<rect x="346" y="501" width="1" height="2" fill="#00ffff"/>
<rect x="347" y="501" width="1" height="2" fill="#00ffff"/>
<rect x="346" y="504" width="1" height="2" fill="#00ffff"/>
<rect x="346" y="507" width="1" height="1" fill="#00ffff"/>
<rect x="347" y="507" width="1" height="1" fill="#00ffff"/>
<rect x="346" y="509" width="1" height="1" fill="#00ffff"/>
<rect x="348" y="509" width="1" height="1" fill="#00ffff"/>
<rect x="347" y="511" width="1" height="2" fill="#00ffff"/>
<rect x="348" y="511" width="1" height="2" fill="#00ffff"/>
<rect x="346" y="513" width="1" height="2" fill="#00ffff"/>
<rect x="348" y="513" width="1" height="2" fill="#00ffff"/>
<rect x="346" y="516" width="1" height="1" fill="#00ffff"/>
<rect x="347" y="516" width="1" height="1" fill="#00ffff"/>
<rect x="346" y="517" width="1" height="1" fill="#00ffff"/>
<rect x="346" y="518" width="1" height="2" fill="#00ffff"/>
<rect x="346" y="521" width="1" height="2" fill="#00ffff"/>
<rect x="348" y="521" width="1" height="2" fill="#00ffff"/>
<rect x="346" y="527" width="1" height="3" fill="#00ffff"/>
<rect x="346" y="530" width="1" height="3" fill="#00ffff"/>
<rect x="347" y="530" width="1" height="3" fill="#00ffff"/>
<rect x="346" y="534" width="1" height="2" fill="#00ffff"/>
<rect x="347" y="534" width="1" height="2" fill="#00ffff"/>
<rect x="346" y="538" width="1" height="2" fill="#00ffff"/>
<rect x="347" y="541" width="1" height="2" fill="#00ffff"/>
<rect x="348" y="541" width="1" height="2" fill="#00ffff"/>
<rect x="346" y="544" width="1" height="2" fill="#00ffff"/>
<rect x="347" y="544" width="1" height="2" fill="#00ffff"/>
<rect x="348" y="544" width="1" height="2" fill="#00ffff"/>
<rect x="347" y="547" width="1" height="2" fill="#00ffff"/>
<rect x="347" y="550" width="1" height="1" fill="#00ffff"/>
<rect x="348" y="550" width="1" height="1" fill="#00ffff"/>
<rect x="346" y="552" width="1" height="2" fill="#00ffff"/>
<rect x="346" y="555" width="1" height="1" fill="#00ffff"/>
<rect x="347" y="555" width="1" height="1" fill="#00ffff"/>
<rect x="346" y="557" width="1" height="3" fill="#00ffff"/>
<rect x="346" y="561" width="1" height="1" fill="#00ffff"/>
<rect x="347" y="561" width="1" height="1" fill="#00ffff"/>
<rect x="346" y="563" width="1" height="1" fill="#00ffff"/>
<rect x="346" y="564" width="1" height="1" fill="#00ffff"/>
<rect x="347" y="564" width="1" height="1" fill="#00ffff"/>
<rect x="347" y="565" width="1" height="2" fill="#00ffff"/>
<rect x="348" y="567" width="1" height="2" fill="#00ffff"/>
<rect x="347" y="570" width="1" height="3" fill="#00ffff"/>
<rect x="348" y="570" width="1" height="3" fill="#00ffff"/>
<rect x="346" y="573" width="1" height="2" fill="#00ffff"/>
<rect x="347" y="576" width="1" height="1" fill="#00ffff"/>
<rect x="346" y="580" width="1" height="1" fill="#00ffff"/>
<rect x="346" y="582" width="1" height="2" fill="#00ffff"/>
<rect x="347" y="585" width="1" height="2" fill="#00ffff"/>
<rect x="348" y="585" width="1" height="2" fill="#00ffff"/>
<rect x="346" y="588" width="1" height="1" fill="#00ffff"/>
<rect x="348" y="588" width="1" height="1" fill="#00ffff"/>
<rect x="348" y="590" width="1" height="2" fill="#00ffff"/>
<rect x="347" y="593" width="1" height="3" fill="#00ffff"/>
<rect x="348" y="593" width="1" height="3" fill="#00ffff"/>
<rect x="348" y="596" width="1" height="1" fill="#00ffff"/>
<rect x="347" y="597" width="1" height="1" fill="#00ffff"/>
<rect x="346" y="599" width="1" height="1" fill="#00ffff"/>
<rect x="347" y="599" width="1" height="1" fill="#00ffff"/>
<rect x="348" y="599" width="1" height="1" fill="#00ffff"/>
<rect x="347" y="601" width="1" height="3" fill="#00ffff"/>
<rect x="348" y="601" width="1" height="3" fill="#00ffff"/>
<rect x="347" y="604" width="1" height="1" fill="#00ffff"/>
<rect x="348" y="604" width="1" height="1" fill="#00ffff"/>
<rect x="346" y="606" width="1" height="2" fill="#00ffff"/>
<rect x="347" y="606" width="1" height="2" fill="#00ffff"/>
<rect x="348" y="606" width="1" height="2" fill="#00ffff"/>
<rect x="356" y="478" width="1" height="3" fill="#00ffff"/>
<rect x="357" y="481" width="1" height="1" fill="#00ffff"/>
<rect x="355" y="482" width="1" height="1" fill="#00ffff"/>
<rect x="355" y="483" width="1" height="2" fill="#00ffff"/>
<rect x="356" y="486" width="1" height="2" fill="#00ffff"/>
<rect x="357" y="486" width="1" height="2" fill="#00ffff"/>
<rect x="355" y="491" width="1" height="1" fill="#00ffff"/>
<rect x="355" y="492" width="1" height="2" fill="#00ffff"/>
<rect x="357" y="492" width="1" height="2" fill="#00ffff"/>
<rect x="355" y="495" width="1" height="1" fill="#00ffff"/>
<rect x="355" y="497" width="1" height="1" fill="#00ffff"/>
<rect x="355" y="499" width="1" height="2" fill="#00ffff"/>
<rect x="355" y="501" width="1" height="3" fill="#00ffff"/>
<rect x="356" y="501" width="1" height="3" fill="#00ffff"/>
<rect x="357" y="501" width="1" height="3" fill="#00ffff"/>
<rect x="357" y="505" width="1" height="1" fill="#00ffff"/>
<rect x="356" y="507" width="1" height="2" fill="#00ffff"/>
<rect x="356" y="513" width="1" height="2" fill="#00ffff"/>
<rect x="356" y="515" width="1" height="2" fill="#00ffff"/>
<rect x="355" y="517" width="1" height="1" fill="#00ffff"/>
<rect x="356" y="517" width="1" height="1" fill="#00ffff"/>
<rect x="356" y="519" width="1" height="1" fill="#00ffff"/>
<rect x="357" y="519" width="1" height="1" fill="#00ffff"/>
<rect x="357" y="521" width="1" height="1" fill="#00ffff"/>
<rect x="355" y="523" width="1" height="2" fill="#00ffff"/>
<rect x="355" y="528" width="1" height="1" fill="#00ffff"/>
<rect x="356" y="528" width="1" height="1" fill="#00ffff"/>
<rect x="357" y="528" width="1" height="1" fill="#00ffff"/>
<rect x="357" y="530" width="1" height="1" fill="#00ffff"/>
<rect x="355" y="531" width="1" height="1" fill="#00ffff"/>
<rect x="357" y="531" width="1" height="1" fill="#00ffff"/>
<rect x="356" y="533" width="1" height="2" fill="#00ffff"/>
<rect x="357" y="533" width="1" height="2" fill="#00ffff"/>
<rect x="356" y="536" width="1" height="1" fill="#00ffff"/>
<rect x="357" y="536" width="1" height="1" fill="#00ffff"/>
<rect x="356" y="538" width="1" height="3" fill="#00ffff"/>
<rect x="357" y="542" width="1" height="1" fill="#00ffff"/>
<rect x="356" y="544" width="1" height="1" fill="#00ffff"/>
<rect x="356" y="545" width="1" height="3" fill="#00ffff"/>
<rect x="357" y="545" width="1" height="3" fill="#00ffff"/>
<rect x="357" y="548" width="1" height="2" fill="#00ffff"/>
<rect x="357" y="551" width="1" height="1" fill="#00ffff"/>
<rect x="355" y="553" width="1" height="3" fill="#00ffff"/>
<rect x="357" y="553" width="1" height="3" fill="#00ffff"/>
<rect x="357" y="556" width="1" height="2" fill="#00ffff"/>
<rect x="357" y="560" width="1" height="3" fill="#00ffff"/>
<rect x="355" y="567" width="1" height="1" fill="#00ffff"/>
<rect x="356" y="567" width="1" height="1" fill="#00ffff"/>
<rect x="355" y="569" width="1" height="3" fill="#00ffff"/>
<rect x="355" y="575" width="1" height="1" fill="#00ffff"/>
<rect x="356" y="575" width="1" height="1" fill="#00ffff"/>
<rect x="357" y="575" width="1" height="1" fill="#00ffff"/>
<rect x="356" y="577" width="1" height="3" fill="#00ffff"/>
<rect x="355" y="581" width="1" height="3" fill="#00ffff"/>
<rect x="356" y="581" width="1" height="3" fill="#00ffff"/>
<rect x="356" y="585" width="1" height="1" fill="#00ffff"/>
<rect x="355" y="589" width="1" height="3" fill="#00ffff"/>
<rect x="356" y="589" width="1" height="3" fill="#00ffff"/>
<rect x="355" y="593" width="1" height="1" fill="#00ffff"/>
<rect x="357" y="593" width="1" height="1" fill="#00ffff"/>
<rect x="356" y="595" width="1" height="1" fill="#00ffff"/>
<rect x="357" y="595" width="1" height="1" fill="#00ffff"/>
<rect x="355" y="597" width="1" height="2" fill="#00ffff"/>
<rect x="356" y="597" width="1" height="2" fill="#00ffff"/>
<rect x="351" y="524" width="1" height="2" fill="#00ffff"/>
<rect x="353" y="524" width="1" height="2" fill="#00ffff"/>
<rect x="352" y="529" width="1" height="2" fill="#00ffff"/>
<rect x="352" y="532" width="1" height="1" fill="#00ffff"/>
<rect x="353" y="532" width="1" height="1" fill="#00ffff"/>
<rect x="351" y="534" width="1" height="1" fill="#00ffff"/>
<rect x="353" y="534" width="1" height="1" fill="#00ffff"/>
<rect x="351" y="535" width="1" height="3" fill="#00ffff"/>
<rect x="353" y="541" width="1" height="2" fill="#00ffff"/>
<rect x="353" y="544" width="1" height="1" fill="#00ffff"/>
<rect x="352" y="546" width="1" height="2" fill="#00ffff"/>
<rect x="351" y="548" width="1" height="1" fill="#00ffff"/>
<rect x="352" y="550" width="1" height="2" fill="#00ffff"/>
<rect x="353" y="550" width="1" height="2" fill="#00ffff"/>
<rect x="351" y="557" width="1" height="1" fill="#00ffff"/>
<rect x="353" y="557" width="1" height="1" fill="#00ffff"/>
<rect x="353" y="559" width="1" height="1" fill="#00ffff"/>
<rect x="352" y="566" width="1" height="2" fill="#00ffff"/>
<rect x="353" y="572" width="1" height="2" fill="#00ffff"/>
<rect x="352" y="575" width="1" height="2" fill="#00ffff"/>
<rect x="352" y="577" width="1" height="2" fill="#00ffff"/>
<rect x="352" y="580" width="1" height="1" fill="#00ffff"/>
<rect x="351" y="582" width="1" height="1" fill="#00ffff"/>
<rect x="352" y="582" width="1" height="1" fill="#00ffff"/>
<rect x="353" y="582" width="1" height="1" fill="#00ffff"/>
<rect x="353" y="584" width="1" height="1" fill="#00ffff"/>
<rect x="352" y="586" width="1" height="2" fill="#00ffff"/>
<rect x="353" y="590" width="1" height="3" fill="#00ffff"/>
<rect x="351" y="595" width="1" height="3" fill="#00ffff"/>
<rect x="351" y="602" width="1" height="2" fill="#00ffff"/>
<rect x="352" y="602" width="1" height="2" fill="#00ffff"/>
<rect x="351" y="605" width="1" height="1" fill="#00ffff"/>
<rect x="352" y="605" width="1" height="1" fill="#00ffff"/>
<line x1="361" y1="266.5" x2="382" y2="266.5" stroke="#ffff00" stroke-width="1"/>
<line x1="382.5" y1="266.5" x2="382.5" y2="547" stroke="#00ff00" stroke-width="1"/>
<line x1="368.5" y1="266.5" x2="368.5" y2="547" stroke="#00ffff" stroke-width="1"/>
<line x1="375.5" y1="266.5" x2="375.5" y2="547" stroke="#00ffff" stroke-width="1"/>
<line x1="362" y1="281.5" x2="382" y2="281.5" stroke="#00ffff" stroke-width="1"/>
<line x1="362" y1="297.5" x2="382" y2="297.5" stroke="#00ffff" stroke-width="1"/>
<line x1="362" y1="327.5" x2="382" y2="327.5" stroke="#00ffff" stroke-width="1"/>
<line x1="361" y1="546.5" x2="382" y2="546.5" stroke="#ffff00" stroke-width="1"/>
<line x1="362" y1="530.5" x2="382" y2="530.5" stroke="#00ffff" stroke-width="1"/>
<rect x="363" y="270" width="1" height="1" fill="#00ffff"/>
<rect x="364" y="270" width="1" height="1" fill="#00ffff"/>
<rect x="366" y="270" width="1" height="1" fill="#00ffff"/>
<rect x="364" y="271" width="1" height="2" fill="#00ffff"/>
<rect x="365" y="271" width="1" height="2" fill="#00ffff"/>
<rect x="363" y="273" width="1" height="1" fill="#00ffff"/>
<rect x="364" y="273" width="1" height="1" fill="#00ffff"/>
<rect x="365" y="273" width="1" height="1" fill="#00ffff"/>
<rect x="366" y="273" width="1" height="1" fill="#00ffff"/>
<rect x="363" y="275" width="1" height="2" fill="#00ffff"/>
<rect x="363" y="278" width="1" height="2" fill="#00ffff"/>
<rect x="364" y="278" width="1" height="2" fill="#00ffff"/>
<rect x="365" y="278" width="1" height="2" fill="#00ffff"/>
<rect x="366" y="278" width="1" height="2" fill="#00ffff"/>
<rect x="363" y="281" width="1" height="2" fill="#00ffff"/>
<rect x="365" y="281" width="1" height="2" fill="#00ffff"/>
<rect x="364" y="283" width="1" height="2" fill="#00ffff"/>
<rect x="365" y="283" width="1" height="2" fill="#00ffff"/>
<rect x="366" y="283" width="1" height="2" fill="#00ffff"/>
<rect x="364" y="286" width="1" height="1" fill="#00ffff"/>
<rect x="363" y="288" width="1" height="3" fill="#00ffff"/>
<rect x="364" y="288" width="1" height="3" fill="#00ffff"/>
<rect x="365" y="288" width="1" height="3" fill="#00ffff"/>
<rect x="366" y="288" width="1" height="3" fill="#00ffff"/>
<rect x="364" y="300" width="1" height="3" fill="#00ffff"/>
<rect x="363" y="304" width="1" height="3" fill="#00ffff"/>
<rect x="363" y="307" width="1" height="1" fill="#00ffff"/>
<rect x="366" y="307" width="1" height="1" fill="#00ffff"/>
<rect x="364" y="309" width="1" height="1" fill="#00ffff"/>
<rect x="365" y="309" width="1" height="1" fill="#00ffff"/>
<rect x="364" y="310" width="1" height="2" fill="#00ffff"/>
<rect x="365" y="310" width="1" height="2" fill="#00ffff"/>
<rect x="363" y="313" width="1" height="1" fill="#00ffff"/>
<rect x="364" y="313" width="1" height="1" fill="#00ffff"/>
<rect x="365" y="313" width="1" height="1" fill="#00ffff"/>
<rect x="364" y="314" width="1" height="2" fill="#00ffff"/>
<rect x="365" y="314" width="1" height="2" fill="#00ffff"/>
<rect x="363" y="317" width="1" height="2" fill="#00ffff"/>
<rect x="364" y="317" width="1" height="2" fill="#00ffff"/>
<rect x="365" y="317" width="1" height="2" fill="#00ffff"/>
<rect x="363" y="320" width="1" height="1" fill="#00ffff"/>
<rect x="364" y="320" width="1" height="1" fill="#00ffff"/>
<rect x="365" y="320" width="1" height="1" fill="#00ffff"/>
<rect x="364" y="321" width="1" height="1" fill="#00ffff"/>
<rect x="365" y="321" width="1" height="1" fill="#00ffff"/>
<rect x="364" y="322" width="1" height="1" fill="#00ffff"/>
<rect x="365" y="322" width="1" height="1" fill="#00ffff"/>
<rect x="364" y="323" width="1" height="2" fill="#00ffff"/>
<rect x="365" y="323" width="1" height="2" fill="#00ffff"/>
<rect x="364" y="505" width="1" height="1" fill="#00ffff"/>
<rect x="364" y="507" width="1" height="2" fill="#00ffff"/>
<rect x="365" y="507" width="1" height="2" fill="#00ffff"/>
<rect x="366" y="507" width="1" height="2" fill="#00ffff"/>
<rect x="363" y="510" width="1" height="3" fill="#00ffff"/>
<rect x="364" y="510" width="1" height="3" fill="#00ffff"/>
<rect x="366" y="510" width="1" height="3" fill="#00ffff"/>
<rect x="363" y="514" width="1" height="3" fill="#00ffff"/>
<rect x="364" y="514" width="1" height="3" fill="#00ffff"/>
<rect x="366" y="514" width="1" height="3" fill="#00ffff"/>
<rect x="363" y="518" width="1" height="1" fill="#00ffff"/>
<rect x="365" y="518" width="1" height="1" fill="#00ffff"/>
<rect x="363" y="520" width="1" height="2" fill="#00ffff"/>
<rect x="365" y="520" width="1" height="2" fill="#00ffff"/>
<rect x="366" y="520" width="1" height="2" fill="#00ffff"/>
<rect x="363" y="523" width="1" height="2" fill="#00ffff"/>
<rect x="364" y="523" width="1" height="2" fill="#00ffff"/>
<rect x="365" y="526" width="1" height="2" fill="#00ffff"/>
<rect x="366" y="526" width="1" height="2" fill="#00ffff"/>
<rect x="363" y="529" width="1" height="3" fill="#00ffff"/>
<rect x="365" y="529" width="1" height="3" fill="#00ffff"/>
<rect x="364" y="533" width="1" height="1" fill="#00ffff"/>
<rect x="365" y="533" width="1" height="1" fill="#00ffff"/>
<rect x="366" y="533" width="1" height="1" fill="#00ffff"/>
<rect x="366" y="535" width="1" height="1" fill="#00ffff"/>
<rect x="363" y="536" width="1" height="3" fill="#00ffff"/>
<rect x="365" y="540" width="1" height="2" fill="#00ffff"/>
<rect x="366" y="540" width="1" height="2" fill="#00ffff"/>
<line x1="329.5" y1="554" x2="329.5" y2="606" stroke="#ffffff" stroke-width="1"/>
<line x1="329" y1="605.5" x2="381" y2="605.5" stroke="#ffffff" stroke-width="1"/>
<rect x="324.5" y="600.5" width="8" height="9" stroke="#ffffff" stroke-width="1" fill="none"/>
<path d="M326 553 L329.5 558 L333 553" stroke="#ffffff" stroke-width="1" fill="none"/>
<path d="M373 599 L380 607 M380 599 L373 607" stroke="#ffffff" stroke-width="1" fill="none"/>
<line x1="688.5" y1="612" x2="688.5" y2="616" stroke="#ffff00" stroke-width="1"/>
<line x1="703.5" y1="612" x2="703.5" y2="616" stroke="#ffff00" stroke-width="1"/>
<line x1="718.5" y1="612" x2="718.5" y2="616" stroke="#ffff00" stroke-width="1"/>
<line x1="733.5" y1="612" x2="733.5" y2="616" stroke="#ffff00" stroke-width="1"/>
<line x1="429.5" y1="232" x2="429.5" y2="453" stroke="#00ffff" stroke-width="1"/>
<line x1="607.5" y1="232" x2="607.5" y2="351" stroke="#00ffff" stroke-width="1"/>
<line x1="560.5" y1="232" x2="560.5" y2="380" stroke="#00ffff" stroke-width="1"/>
<line x1="429.5" y1="235.5" x2="607.5" y2="235.5" stroke="#00ffff" stroke-width="1"/>
<rect x="430.5" y="234.5" width="3" height="2" stroke="#00ffff" stroke-width="0" fill="#00ffff"/>
<rect x="603.5" y="234.5" width="3" height="2" stroke="#00ffff" stroke-width="0" fill="#00ffff"/>
<line x1="560.5" y1="235.5" x2="607.5" y2="235.5" stroke="#00ffff" stroke-width="1"/>
<text x="495" y="234" fill="#00ff00" font-family="Liberation Sans" font-size="8" text-anchor="middle" textLength="20" lengthAdjust="spacingAndGlyphs">1695</text>
<text x="583" y="234" fill="#00ff00" font-family="Liberation Sans" font-size="8" text-anchor="middle" textLength="15" lengthAdjust="spacingAndGlyphs">630</text>
<line x1="459.5" y1="248" x2="459.5" y2="280" stroke="#00ffff" stroke-width="1"/>
<line x1="582.5" y1="248" x2="582.5" y2="280" stroke="#00ffff" stroke-width="1"/>
<line x1="459.5" y1="250.5" x2="582.5" y2="250.5" stroke="#00ffff" stroke-width="1"/>
<rect x="460.5" y="249.5" width="3" height="2" stroke="#00ffff" stroke-width="0" fill="#00ffff"/>
<rect x="578.5" y="249.5" width="3" height="2" stroke="#00ffff" stroke-width="0" fill="#00ffff"/>
<text x="521" y="248" fill="#00ff00" font-family="Liberation Sans" font-size="8" text-anchor="middle" textLength="20" lengthAdjust="spacingAndGlyphs">1600</text>
<line x1="430" y1="267.5" x2="521.5" y2="267.5" stroke="#00ffff" stroke-width="1"/>
<rect x="431" y="266.5" width="3" height="2" stroke="#00ffff" stroke-width="0" fill="#00ffff"/>
<rect x="517.5" y="266.5" width="3" height="2" stroke="#00ffff" stroke-width="0" fill="#00ffff"/>
<text x="476" y="266" fill="#00ff00" font-family="Liberation Sans" font-size="8" text-anchor="middle" textLength="19" lengthAdjust="spacingAndGlyphs">1185</text>
<line x1="521.5" y1="265" x2="521.5" y2="292" stroke="#00ffff" stroke-width="1"/>
<path d="M459.5 280 L472 277.5 L490 275.5 L521 274.5 L552 275.5 L570 277.5 L582.5 280" stroke="#ffff00" stroke-width="1" fill="none"/>
<line x1="459.5" y1="280" x2="459.5" y2="351" stroke="#ffff00" stroke-width="1"/>
<line x1="582.5" y1="280" x2="582.5" y2="351" stroke="#ffff00" stroke-width="1"/>
<rect x="509.5" y="281.5" width="24" height="59" stroke="#00ff00" stroke-width="1" fill="none" stroke-dasharray="2 1.5"/>
<rect x="513.5" y="288.5" width="16" height="49" stroke="#00ff00" stroke-width="1" fill="none" stroke-dasharray="2 1.5"/>
<path d="M515 292 L521 288 L528 292 M517 297 L521 300 L526 296" stroke="#00ff00" stroke-width="1" fill="none"/>
<line x1="516" y1="334.5" x2="528" y2="334.5" stroke="#00ffff" stroke-width="1"/>
<line x1="521.5" y1="326" x2="521.5" y2="334" stroke="#00ffff" stroke-width="1"/>
<line x1="577" y1="296.5" x2="612.5" y2="281" stroke="#00ffff" stroke-width="1"/>
<circle cx="577" cy="296.5" r="1.5" fill="#00ffff"/>
<text x="618" y="280" fill="#ffff00" font-family="Liberation Sans" font-size="10" text-anchor="middle">5</text>
<line x1="430" y1="330.5" x2="485.5" y2="330.5" stroke="#00ffff" stroke-width="1"/>
<rect x="431" y="329.5" width="3" height="2" stroke="#00ffff" stroke-width="0" fill="#00ffff"/>
<rect x="481.5" y="329.5" width="3" height="2" stroke="#00ffff" stroke-width="0" fill="#00ffff"/>
<text x="447" y="328" fill="#00ff00" font-family="Liberation Sans" font-size="8" text-anchor="middle" textLength="15" lengthAdjust="spacingAndGlyphs">725</text>
<line x1="485.5" y1="327" x2="485.5" y2="385" stroke="#00ffff" stroke-width="1"/>
<line x1="459" y1="351" x2="608" y2="351" stroke="#ffff00" stroke-width="2"/>
<line x1="460.5" y1="351" x2="460.5" y2="421" stroke="#ffff00" stroke-width="2"/>
<line x1="582.5" y1="351" x2="582.5" y2="421" stroke="#ffff00" stroke-width="1"/>
<line x1="459" y1="421" x2="583" y2="421" stroke="#ffff00" stroke-width="2"/>
<line x1="607" y1="351" x2="607" y2="391" stroke="#ffff00" stroke-width="2"/>
<line x1="583" y1="354.5" x2="606" y2="354.5" stroke="#ffff00" stroke-width="1"/>
<path d="M583 371 L591 379 H593 V410" stroke="#ffff00" stroke-width="1" fill="none"/>
<path d="M468 342 V348 Q472 352 476 348 V342" stroke="#ffff00" stroke-width="1.5" fill="none"/>
<path d="M566 342 V348 Q570 352 574 348 V342" stroke="#ffff00" stroke-width="1.5" fill="none"/>
<rect x="460.5" y="409.5" width="20" height="11" stroke="#ffff00" stroke-width="1" fill="none"/>
<rect x="561.5" y="409.5" width="20" height="11" stroke="#ffff00" stroke-width="1" fill="none"/>
<rect x="541.5" y="351.5" width="41" height="39" stroke="#00ff00" stroke-width="1" fill="none" stroke-dasharray="3 1.5"/>
<line x1="545.5" y1="355" x2="545.5" y2="388" stroke="#00ff00" stroke-width="1" stroke-dasharray="3 1.5"/>
<circle cx="554" cy="377" r="1.5" fill="#00ffff"/><circle cx="565" cy="365" r="1.5" fill="#00ffff"/><circle cx="565" cy="376" r="1.5" fill="#00ffff"/>
<line x1="541" y1="370.5" x2="607" y2="370.5" stroke="#00ffff" stroke-width="1"/>
<line x1="549" y1="342" x2="555" y2="362" stroke="#00ffff" stroke-width="1"/>
<text x="550" y="342" fill="#ffff00" font-family="Liberation Sans" font-size="10" text-anchor="middle">3</text>
<line x1="416" y1="388.5" x2="440" y2="388.5" stroke="#00ff00" stroke-width="1"/>
<line x1="440" y1="388.5" x2="628" y2="388.5" stroke="#00ffff" stroke-width="1" stroke-dasharray="8 2 2 2"/>
<circle cx="421" cy="388.5" r="1.3" fill="#00ff00"/><circle cx="437" cy="388.5" r="1.3" fill="#00ff00"/>
<rect x="430.5" y="384.5" width="13" height="7" stroke="#ffff00" stroke-width="1" fill="none"/>
<rect x="443.5" y="382.5" width="6" height="13" stroke="#ffff00" stroke-width="1" fill="none"/>
<rect x="449.5" y="380.5" width="9" height="14" stroke="#ffff00" stroke-width="1" fill="none"/>
<path d="M449 396 H455 V407 H460" stroke="#ffff00" stroke-width="1" fill="none"/>
<path d="M454 379 V372 H460" stroke="#ffff00" stroke-width="1" fill="none"/>
<path d="M452 372 L456 367 L459 372 Z" fill="#00ffff"/>
<line x1="424" y1="364" x2="436" y2="384" stroke="#00ffff" stroke-width="1"/>
<line x1="446" y1="361" x2="453" y2="381" stroke="#00ffff" stroke-width="1"/>
<line x1="424" y1="401" x2="430" y2="391" stroke="#00ffff" stroke-width="1"/>
<line x1="425" y1="430" x2="434" y2="392" stroke="#00ffff" stroke-width="1"/>
<text x="421" y="363" fill="#ffff00" font-family="Liberation Sans" font-size="10" text-anchor="middle">7</text>
<text x="445" y="360" fill="#ffff00" font-family="Liberation Sans" font-size="10" text-anchor="middle">1</text>
<text x="420" y="411" fill="#ffff00" font-family="Liberation Sans" font-size="10" text-anchor="middle">9</text>
<text x="419" y="439" fill="#ffff00" font-family="Liberation Sans" font-size="10" text-anchor="middle">8</text>
<text x="404" y="409" fill="#ff0000" font-family="Liberation Sans" font-size="13" text-anchor="middle">D</text>
<rect x="477.5" y="365.5" width="17" height="9" stroke="#00ff00" stroke-width="1" fill="none" stroke-dasharray="2 1.5"/>
<line x1="484.5" y1="368" x2="484.5" y2="384" stroke="#00ffff" stroke-width="1"/>
<line x1="488.5" y1="368" x2="488.5" y2="384" stroke="#00ffff" stroke-width="1"/>
<line x1="473" y1="382.5" x2="509" y2="382.5" stroke="#00ffff" stroke-width="1"/>
<line x1="495" y1="370" x2="505" y2="366" stroke="#00ffff" stroke-width="1"/>
<text x="507" y="368" fill="#ffff00" font-family="Liberation Sans" font-size="10" text-anchor="middle">4</text>
<text x="497" y="382" fill="#00ff00" font-family="Liberation Sans" font-size="8" text-anchor="start" textLength="13" lengthAdjust="spacingAndGlyphs">Rp 1</text>
<text x="512" y="382" fill="#00ff00" font-family="Liberation Sans" font-size="5" text-anchor="start" textLength="20" lengthAdjust="spacingAndGlyphs">BSPP 3/4</text>
<path d="M583 373 H598 L604 380 V398 H615 V405 L605 414 H583" stroke="#ffff00" stroke-width="1" fill="none"/>
<rect x="583.5" y="396.5" width="10" height="9" stroke="#00ff00" stroke-width="1" fill="none" stroke-dasharray="2 1"/>
<rect x="608.5" y="382.5" width="13" height="13" stroke="#00ffff" stroke-width="1" fill="none"/>
<line x1="622" y1="383" x2="627" y2="385" stroke="#00ffff" stroke-width="1"/>
<line x1="622" y1="394" x2="627" y2="392" stroke="#00ffff" stroke-width="1"/>
<line x1="602" y1="388" x2="625" y2="388" stroke="#ffff00" stroke-width="1"/>
<line x1="592.5" y1="406.8" x2="602.8" y2="429.3" stroke="#00ffff" stroke-width="1"/>
<line x1="611" y1="403.7" x2="649.8" y2="390.4" stroke="#00ffff" stroke-width="1"/>
<text x="609" y="437" fill="#ffff00" font-family="Liberation Sans" font-size="10" text-anchor="middle">2</text>
<text x="656" y="390" fill="#ffff00" font-family="Liberation Sans" font-size="10" text-anchor="middle">10</text>
<text x="645" y="408" fill="#ff0000" font-family="Liberation Sans" font-size="13" text-anchor="middle">N</text>
<circle cx="592.5" cy="406.8" r="1.5" fill="#00ffff"/><circle cx="611" cy="403.7" r="1.5" fill="#00ffff"/>
<text x="538" y="435" fill="#ffff00" font-family="Liberation Sans" font-size="10" text-anchor="middle">6</text>
<line x1="541" y1="428" x2="550" y2="419" stroke="#00ffff" stroke-width="1"/>
<text x="545" y="418" fill="#00ff00" font-family="Liberation Sans" font-size="6" text-anchor="middle" textLength="20" lengthAdjust="spacingAndGlyphs">4xM16</text>
<rect x="550.5" y="415.5" width="5" height="4" stroke="#ffff00" stroke-width="1" fill="none"/>
<line x1="443.5" y1="395" x2="443.5" y2="453" stroke="#00ffff" stroke-width="1"/>
<line x1="459.5" y1="421" x2="459.5" y2="467" stroke="#00ffff" stroke-width="1"/>
<line x1="486.5" y1="421" x2="486.5" y2="439" stroke="#00ffff" stroke-width="1"/>
<line x1="555.5" y1="421" x2="555.5" y2="439" stroke="#00ffff" stroke-width="1"/>
<line x1="467.5" y1="421" x2="467.5" y2="453" stroke="#00ffff" stroke-width="1"/>
<line x1="574.5" y1="421" x2="574.5" y2="453" stroke="#00ffff" stroke-width="1"/>
<line x1="582.5" y1="421" x2="582.5" y2="467" stroke="#00ffff" stroke-width="1"/>
<line x1="623.5" y1="395" x2="623.5" y2="453" stroke="#00ffff" stroke-width="1"/>
<line x1="443.5" y1="436.5" x2="459.5" y2="436.5" stroke="#00ffff" stroke-width="1"/>
<rect x="444.5" y="435.5" width="3" height="2" stroke="#00ffff" stroke-width="0" fill="#00ffff"/>
<rect x="455.5" y="435.5" width="3" height="2" stroke="#00ffff" stroke-width="0" fill="#00ffff"/>
<line x1="459.5" y1="436.5" x2="486.5" y2="436.5" stroke="#00ffff" stroke-width="1"/>
<rect x="460.5" y="435.5" width="3" height="2" stroke="#00ffff" stroke-width="0" fill="#00ffff"/>
<rect x="482.5" y="435.5" width="3" height="2" stroke="#00ffff" stroke-width="0" fill="#00ffff"/>
<line x1="555.5" y1="436.5" x2="582.5" y2="436.5" stroke="#00ffff" stroke-width="1"/>
<rect x="556.5" y="435.5" width="3" height="2" stroke="#00ffff" stroke-width="0" fill="#00ffff"/>
<rect x="578.5" y="435.5" width="3" height="2" stroke="#00ffff" stroke-width="0" fill="#00ffff"/>
<text x="452" y="434" fill="#00ff00" font-family="Liberation Sans" font-size="8" text-anchor="middle" textLength="12" lengthAdjust="spacingAndGlyphs">215</text>
<text x="473" y="434" fill="#00ff00" font-family="Liberation Sans" font-size="8" text-anchor="middle" textLength="13" lengthAdjust="spacingAndGlyphs">350</text>
<text x="569" y="434" fill="#00ff00" font-family="Liberation Sans" font-size="8" text-anchor="middle" textLength="13" lengthAdjust="spacingAndGlyphs">350</text>
<line x1="430.5" y1="451.5" x2="443.5" y2="451.5" stroke="#00ffff" stroke-width="1"/>
<rect x="431.5" y="450.5" width="3" height="2" stroke="#00ffff" stroke-width="0" fill="#00ffff"/>
<rect x="439.5" y="450.5" width="3" height="2" stroke="#00ffff" stroke-width="0" fill="#00ffff"/>
<line x1="443.5" y1="451.5" x2="459.5" y2="451.5" stroke="#00ffff" stroke-width="1"/>
<rect x="444.5" y="450.5" width="3" height="2" stroke="#00ffff" stroke-width="0" fill="#00ffff"/>
<rect x="455.5" y="450.5" width="3" height="2" stroke="#00ffff" stroke-width="0" fill="#00ffff"/>
<line x1="467.5" y1="451.5" x2="574.5" y2="451.5" stroke="#00ffff" stroke-width="1"/>
<rect x="468.5" y="450.5" width="3" height="2" stroke="#00ffff" stroke-width="0" fill="#00ffff"/>
<rect x="570.5" y="450.5" width="3" height="2" stroke="#00ffff" stroke-width="0" fill="#00ffff"/>
<line x1="582.5" y1="451.5" x2="623.5" y2="451.5" stroke="#00ffff" stroke-width="1"/>
<rect x="583.5" y="450.5" width="3" height="2" stroke="#00ffff" stroke-width="0" fill="#00ffff"/>
<rect x="619.5" y="450.5" width="3" height="2" stroke="#00ffff" stroke-width="0" fill="#00ffff"/>
<text x="437" y="449" fill="#00ff00" font-family="Liberation Sans" font-size="8" text-anchor="middle" textLength="11" lengthAdjust="spacingAndGlyphs">170</text>
<text x="451.5" y="449" fill="#00ff00" font-family="Liberation Sans" font-size="8" text-anchor="middle" textLength="12" lengthAdjust="spacingAndGlyphs">315</text>
<text x="521" y="449" fill="#00ff00" font-family="Liberation Sans" font-size="8" text-anchor="middle" textLength="19" lengthAdjust="spacingAndGlyphs">1400</text>
<text x="602" y="449" fill="#00ff00" font-family="Liberation Sans" font-size="8" text-anchor="middle" textLength="18" lengthAdjust="spacingAndGlyphs">~800</text>
<line x1="459.5" y1="463.5" x2="582.5" y2="463.5" stroke="#00ffff" stroke-width="1"/>
<rect x="460.5" y="462.5" width="3" height="2" stroke="#00ffff" stroke-width="0" fill="#00ffff"/>
<rect x="578.5" y="462.5" width="3" height="2" stroke="#00ffff" stroke-width="0" fill="#00ffff"/>
<text x="521" y="461" fill="#00ff00" font-family="Liberation Sans" font-size="8" text-anchor="middle" textLength="19" lengthAdjust="spacingAndGlyphs">1600</text>
<circle cx="466.5" cy="516.5" r="6" stroke="#ffff00" fill="none"/>
<line x1="442" y1="512.5" x2="493" y2="512.5" stroke="#00ffff" stroke-width="1"/>
<line x1="442" y1="523.5" x2="480" y2="523.5" stroke="#00ffff" stroke-width="1"/>
<line x1="444.5" y1="496" x2="444.5" y2="533" stroke="#00ffff" stroke-width="1"/>
<line x1="464.5" y1="488" x2="464.5" y2="540" stroke="#00ffff" stroke-width="1"/>
<line x1="468.5" y1="488" x2="468.5" y2="527" stroke="#00ffff" stroke-width="1"/>
<line x1="489.5" y1="500" x2="489.5" y2="523" stroke="#00ffff" stroke-width="1"/>
<line x1="461" y1="522" x2="461" y2="540" stroke="#00ffff" stroke-width="1"/>
<line x1="473" y1="522" x2="473" y2="540" stroke="#00ffff" stroke-width="1"/>
<line x1="455" y1="492.5" x2="478" y2="492.5" stroke="#00ffff" stroke-width="1"/>
<rect x="456" y="491.5" width="3" height="2" stroke="#00ffff" stroke-width="0" fill="#00ffff"/>
<rect x="474" y="491.5" width="3" height="2" stroke="#00ffff" stroke-width="0" fill="#00ffff"/>
<text x="467" y="490" fill="#00ff00" font-family="Liberation Sans" font-size="8" text-anchor="middle" textLength="21" lengthAdjust="spacingAndGlyphs">25 h9</text>
<text x="440" y="500" fill="#00ff00" font-family="Liberation Sans" font-size="7" text-anchor="middle" textLength="6" lengthAdjust="spacingAndGlyphs" transform="rotate(-90 440 500)">81</text>
<text x="488" y="520" fill="#00ff00" font-family="Liberation Sans" font-size="7" text-anchor="middle" textLength="7" lengthAdjust="spacingAndGlyphs" transform="rotate(-90 488 520)">14</text>
<line x1="460" y1="539.5" x2="487" y2="539.5" stroke="#00ffff" stroke-width="1"/>
<text x="474" y="538" fill="#00ff00" font-family="Liberation Sans" font-size="8" text-anchor="middle" textLength="23" lengthAdjust="spacingAndGlyphs">90 m8</text>
<path d="M489 527 H507 Q510 533 507 539 H489 Q486 533 489 527 Z" stroke="#00ffff" stroke-width="1" fill="none"/>
<text x="498" y="532" fill="#00ff00" font-family="Liberation Sans" font-size="4" text-anchor="middle" textLength="15" lengthAdjust="spacingAndGlyphs">+0.035</text>
<text x="498" y="538" fill="#00ff00" font-family="Liberation Sans" font-size="4" text-anchor="middle" textLength="15" lengthAdjust="spacingAndGlyphs">+0.013</text>
<text x="400" y="580.5" fill="#00ff00" font-family="Liberation Sans" font-size="7.5" text-anchor="start" textLength="241" lengthAdjust="spacingAndGlyphs">NOTE : The description of the reference numbers is on the sheet 3/4</text>
<text x="400" y="589.5" fill="#00ff00" font-family="Liberation Sans" font-size="7.5" text-anchor="start" textLength="258" lengthAdjust="spacingAndGlyphs">BEMERKUNG Die bezugsnummerbeschreibung ist in der seite 3/4 aufgefuhrt</text>
<line x1="751.5" y1="217" x2="751.5" y2="430" stroke="#00ffff" stroke-width="1"/>
<line x1="878.5" y1="217" x2="878.5" y2="422" stroke="#00ffff" stroke-width="1"/>
<line x1="751.5" y1="219" x2="878.5" y2="219" stroke="#00ffff" stroke-width="1"/>
<rect x="752.5" y="218" width="3" height="2" stroke="#00ffff" stroke-width="0" fill="#00ffff"/>
<rect x="874.5" y="218" width="3" height="2" stroke="#00ffff" stroke-width="0" fill="#00ffff"/>
<text x="815" y="217" fill="#00ff00" font-family="Liberation Sans" font-size="8" text-anchor="middle" textLength="19" lengthAdjust="spacingAndGlyphs">1880</text>
<line x1="751.5" y1="236" x2="832.5" y2="236" stroke="#00ffff" stroke-width="1"/>
<rect x="752.5" y="235" width="3" height="2" stroke="#00ffff" stroke-width="0" fill="#00ffff"/>
<rect x="828.5" y="235" width="3" height="2" stroke="#00ffff" stroke-width="0" fill="#00ffff"/>
<line x1="832.5" y1="236" x2="878.5" y2="236" stroke="#00ffff" stroke-width="1"/>
<rect x="833.5" y="235" width="3" height="2" stroke="#00ffff" stroke-width="0" fill="#00ffff"/>
<rect x="874.5" y="235" width="3" height="2" stroke="#00ffff" stroke-width="0" fill="#00ffff"/>
<text x="792" y="234" fill="#00ff00" font-family="Liberation Sans" font-size="8" text-anchor="middle" textLength="19" lengthAdjust="spacingAndGlyphs">1055</text>
<text x="855" y="234" fill="#00ff00" font-family="Liberation Sans" font-size="8" text-anchor="middle" textLength="14" lengthAdjust="spacingAndGlyphs">605</text>
<line x1="765.5" y1="248" x2="765.5" y2="380" stroke="#00ffff" stroke-width="1"/>
<line x1="765.5" y1="250.5" x2="832.5" y2="250.5" stroke="#00ffff" stroke-width="1"/>
<rect x="766.5" y="249.5" width="3" height="2" stroke="#00ffff" stroke-width="0" fill="#00ffff"/>
<rect x="828.5" y="249.5" width="3" height="2" stroke="#00ffff" stroke-width="0" fill="#00ffff"/>
<text x="799" y="248" fill="#00ff00" font-family="Liberation Sans" font-size="8" text-anchor="middle" textLength="14" lengthAdjust="spacingAndGlyphs">670</text>
<line x1="832.5" y1="233" x2="832.5" y2="427" stroke="#00ffff" stroke-width="1" stroke-dasharray="12 2 3 2"/>
<line x1="792" y1="274.5" x2="871" y2="274.5" stroke="#ffff00" stroke-width="1"/>
<line x1="793" y1="279.5" x2="870" y2="279.5" stroke="#ffff00" stroke-width="1"/>
<line x1="793" y1="274.5" x2="793" y2="352" stroke="#ffff00" stroke-width="2"/>
<line x1="870.5" y1="279.5" x2="870.5" y2="352" stroke="#ffff00" stroke-width="2"/>
<line x1="871" y1="274.5" x2="908" y2="274.5" stroke="#00ffff" stroke-width="1"/>
<line x1="722" y1="292.5" x2="794" y2="292.5" stroke="#00ffff" stroke-width="1"/>
<line x1="722" y1="334.5" x2="794" y2="334.5" stroke="#00ffff" stroke-width="1"/>
<line x1="724.5" y1="292.5" x2="724.5" y2="334.5" stroke="#00ffff" stroke-width="1"/>
<rect x="723.5" y="293.5" width="2" height="3" stroke="#00ffff" stroke-width="0" fill="#00ffff"/>
<rect x="723.5" y="330.5" width="2" height="3" stroke="#00ffff" stroke-width="0" fill="#00ffff"/>
<text x="721" y="313" fill="#00ff00" font-family="Liberation Sans" font-size="8" text-anchor="middle" textLength="11" lengthAdjust="spacingAndGlyphs" transform="rotate(-90 721 313)">530</text>
<line x1="778.5" y1="310.5" x2="832.5" y2="310.5" stroke="#00ffff" stroke-width="1"/>
<rect x="779.5" y="309.5" width="3" height="2" stroke="#00ffff" stroke-width="0" fill="#00ffff"/>
<rect x="828.5" y="309.5" width="3" height="2" stroke="#00ffff" stroke-width="0" fill="#00ffff"/>
<text x="805" y="308" fill="#00ff00" font-family="Liberation Sans" font-size="8" text-anchor="middle" textLength="13" lengthAdjust="spacingAndGlyphs">620</text>
<line x1="778.5" y1="287" x2="778.5" y2="312" stroke="#00ffff" stroke-width="1"/>
<rect x="779.5" y="286.5" width="4" height="14" stroke="#ffff00" stroke-width="1" fill="none"/>
<rect x="783.5" y="289.5" width="7" height="8" stroke="#ffff00" stroke-width="1" fill="none"/>
<line x1="790.5" y1="286" x2="790.5" y2="342" stroke="#ffff00" stroke-width="1"/>
<rect x="779.5" y="328.5" width="4" height="14" stroke="#ffff00" stroke-width="1" fill="none"/>
<rect x="783.5" y="331.5" width="7" height="8" stroke="#ffff00" stroke-width="1" fill="none"/>
<line x1="748" y1="280" x2="780" y2="287" stroke="#00ffff" stroke-width="1"/>
<line x1="748" y1="322" x2="780" y2="329" stroke="#00ffff" stroke-width="1"/>
<text x="738" y="282" fill="#ffff00" font-family="Liberation Sans" font-size="10" text-anchor="middle">5</text>
<text x="738" y="324" fill="#ffff00" font-family="Liberation Sans" font-size="10" text-anchor="middle">5</text>
<text x="662" y="294" fill="#00ff00" font-family="Liberation Sans" font-size="5" text-anchor="start" textLength="30" lengthAdjust="spacingAndGlyphs">WASSER AUSTR</text>
<text x="662" y="299" fill="#00ff00" font-family="Liberation Sans" font-size="5" text-anchor="start" textLength="29" lengthAdjust="spacingAndGlyphs">WATER OUTLET</text>
<text x="662" y="336" fill="#00ff00" font-family="Liberation Sans" font-size="5" text-anchor="start" textLength="30" lengthAdjust="spacingAndGlyphs">WASSER EINTR</text>
<text x="662" y="341" fill="#00ff00" font-family="Liberation Sans" font-size="5" text-anchor="start" textLength="28" lengthAdjust="spacingAndGlyphs">WATER INLET</text>
<path d="M700 292.5 H712 M700 292.5 L705 290 V295 Z" stroke="#00ffff" stroke-width="1.5" fill="#00ffff"/>
<path d="M700 334.5 H712 M712 334.5 L707 332 V337 Z" stroke="#00ffff" stroke-width="1.5" fill="#00ffff"/>
<text x="847" y="344" fill="#ffff00" font-family="Liberation Sans" font-size="10" text-anchor="middle" textLength="9" lengthAdjust="spacingAndGlyphs">11</text>
<circle cx="791" cy="346" r="2" stroke="#ffff00" fill="none"/><circle cx="871" cy="346" r="2" stroke="#ffff00" fill="none"/>
<line x1="794" y1="351.5" x2="872" y2="351.5" stroke="#ffff00" stroke-width="1"/>
<line x1="794.5" y1="352" x2="794.5" y2="423" stroke="#ffff00" stroke-width="1"/>
<line x1="871.5" y1="352" x2="871.5" y2="365" stroke="#ffff00" stroke-width="1"/>
<path d="M871.5 365 L868 369 V423" stroke="#ffff00" stroke-width="1" fill="none"/>
<circle cx="832" cy="387.5" r="34.5" stroke="#ffff00" fill="none"/>
<circle cx="791" cy="357" r="3" stroke="#ffff00" fill="none"/><circle cx="873" cy="357" r="3" stroke="#ffff00" fill="none"/>
<circle cx="799" cy="417" r="3" stroke="#ffff00" fill="none"/><circle cx="865" cy="417" r="3" stroke="#ffff00" fill="none"/>
<path d="M818 380 Q832 366 846 380 V408 H821 Z" stroke="#ffff00" stroke-width="1" fill="none"/>
<path d="M822 382 Q832 372 842 382 V406 H823 Z" fill="#00ffff" opacity="0.75"/>
<path d="M826 396 V408 M830 396 V408 M834 396 V408 M838 396 V408" stroke="#00ffff" stroke-width="1" fill="none"/>
<circle cx="832" cy="388" r="5.5" stroke="#ffff00" fill="#000"/>
<line x1="790" y1="387.5" x2="886" y2="387.5" stroke="#00ffff" stroke-width="1" stroke-dasharray="10 2 3 2"/>
<line x1="819" y1="361" x2="842" y2="358" stroke="#00ff00" stroke-width="1"/>
<line x1="841" y1="346" x2="839" y2="360" stroke="#00ffff" stroke-width="1"/>
<rect x="751.5" y="352.5" width="25" height="37" stroke="#ffff00" stroke-width="1" fill="none"/>
<rect x="759.5" y="357.5" width="12" height="27" stroke="#00ffff" stroke-width="1" fill="none" stroke-dasharray="3 2"/>
<rect x="764.5" y="350.5" width="3" height="42" stroke="#ffff00" stroke-width="1" fill="none"/>
<path d="M777 357 H788 M777 384 H788" stroke="#ffff00" stroke-width="1" fill="none"/>
<rect x="786.5" y="365.5" width="5" height="7" stroke="#ffff00" stroke-width="1" fill="none"/>
<line x1="738" y1="371.5" x2="796" y2="371.5" stroke="#00ffff" stroke-width="1" stroke-dasharray="12 2 3 2"/>
<line x1="760.8" y1="386.7" x2="753.7" y2="403.4" stroke="#00ffff" stroke-width="1"/>
<line x1="790.7" y1="375.2" x2="777.5" y2="405.2" stroke="#00ffff" stroke-width="1"/>
<text x="754" y="414" fill="#ffff00" font-family="Liberation Sans" font-size="10" text-anchor="middle">3</text>
<text x="775" y="414" fill="#ffff00" font-family="Liberation Sans" font-size="10" text-anchor="middle">4</text>
<line x1="722" y1="422.5" x2="907" y2="422.5" stroke="#00ffff" stroke-width="1"/>
<line x1="793" y1="422.5" x2="868" y2="422.5" stroke="#ffff00" stroke-width="1.5"/>
<line x1="724.5" y1="292.5" x2="724.5" y2="422.5" stroke="#00ffff" stroke-width="1"/>
<rect x="723.5" y="293.5" width="2" height="3" stroke="#00ffff" stroke-width="0" fill="#00ffff"/>
<rect x="723.5" y="418.5" width="2" height="3" stroke="#00ffff" stroke-width="0" fill="#00ffff"/>
<text x="721" y="379" fill="#00ff00" font-family="Liberation Sans" font-size="8" text-anchor="middle" textLength="15" lengthAdjust="spacingAndGlyphs" transform="rotate(-90 721 379)">1170</text>
<line x1="740.5" y1="371.5" x2="740.5" y2="422.5" stroke="#00ffff" stroke-width="1"/>
<rect x="739.5" y="372.5" width="2" height="3" stroke="#00ffff" stroke-width="0" fill="#00ffff"/>
<rect x="739.5" y="418.5" width="2" height="3" stroke="#00ffff" stroke-width="0" fill="#00ffff"/>
<text x="737" y="394" fill="#00ff00" font-family="Liberation Sans" font-size="8" text-anchor="middle" textLength="12" lengthAdjust="spacingAndGlyphs" transform="rotate(-90 737 394)">680</text>
<line x1="901.5" y1="351.5" x2="901.5" y2="422.5" stroke="#00ffff" stroke-width="1"/>
<rect x="900.5" y="352.5" width="2" height="3" stroke="#00ffff" stroke-width="0" fill="#00ffff"/>
<rect x="900.5" y="418.5" width="2" height="3" stroke="#00ffff" stroke-width="0" fill="#00ffff"/>
<text x="898" y="377" fill="#00ff00" font-family="Liberation Sans" font-size="8" text-anchor="middle" textLength="12" lengthAdjust="spacingAndGlyphs" transform="rotate(-90 898 377)">940</text>
<line x1="882.5" y1="387.5" x2="882.5" y2="422.5" stroke="#00ffff" stroke-width="1"/>
<rect x="881.5" y="388.5" width="2" height="3" stroke="#00ffff" stroke-width="0" fill="#00ffff"/>
<rect x="881.5" y="418.5" width="2" height="3" stroke="#00ffff" stroke-width="0" fill="#00ffff"/>
<text x="879" y="402" fill="#00ff00" font-family="Liberation Sans" font-size="8" text-anchor="middle" textLength="17" lengthAdjust="spacingAndGlyphs" transform="rotate(-90 879 402)">450-9</text>
<line x1="872" y1="351.5" x2="906" y2="351.5" stroke="#00ffff" stroke-width="1"/>
<line x1="786.5" y1="412" x2="786.5" y2="436" stroke="#00ffff" stroke-width="1"/>
<text x="782" y="430" fill="#00ff00" font-family="Liberation Sans" font-size="8" text-anchor="middle" textLength="8" lengthAdjust="spacingAndGlyphs" transform="rotate(-90 782 430)">25</text>
<line x1="780" y1="434.5" x2="816" y2="434.5" stroke="#00ffff" stroke-width="1"/>
<text x="809" y="433" fill="#00ff00" font-family="Liberation Sans" font-size="8" text-anchor="middle" textLength="12" lengthAdjust="spacingAndGlyphs">ø42</text>
<rect x="855.5" y="423.5" width="15" height="12" stroke="#00ffff" stroke-width="1" fill="none"/>
<text x="863" y="433" fill="#00ff00" font-family="Liberation Sans" font-size="8" text-anchor="middle" textLength="13" lengthAdjust="spacingAndGlyphs">200</text>
<line x1="793.5" y1="423" x2="793.5" y2="464" stroke="#00ffff" stroke-width="1"/>
<line x1="799.5" y1="423" x2="799.5" y2="450" stroke="#00ffff" stroke-width="1"/>
<line x1="864.5" y1="423" x2="864.5" y2="450" stroke="#00ffff" stroke-width="1"/>
<line x1="870.5" y1="423" x2="870.5" y2="464" stroke="#00ffff" stroke-width="1"/>
<line x1="799.5" y1="448.5" x2="864.5" y2="448.5" stroke="#00ffff" stroke-width="1"/>
<rect x="800.5" y="447.5" width="3" height="2" stroke="#00ffff" stroke-width="0" fill="#00ffff"/>
<rect x="860.5" y="447.5" width="3" height="2" stroke="#00ffff" stroke-width="0" fill="#00ffff"/>
<text x="832" y="446" fill="#00ff00" font-family="Liberation Sans" font-size="8" text-anchor="middle" textLength="13" lengthAdjust="spacingAndGlyphs">850</text>
<line x1="793.5" y1="460.5" x2="870.5" y2="460.5" stroke="#00ffff" stroke-width="1"/>
<rect x="794.5" y="459.5" width="3" height="2" stroke="#00ffff" stroke-width="0" fill="#00ffff"/>
<rect x="866.5" y="459.5" width="3" height="2" stroke="#00ffff" stroke-width="0" fill="#00ffff"/>
<text x="832" y="458" fill="#00ff00" font-family="Liberation Sans" font-size="8" text-anchor="middle" textLength="18" lengthAdjust="spacingAndGlyphs">1000</text>
<text x="748" y="484.5" fill="#ffff00" font-family="Liberation Sans" font-size="8" text-anchor="start" textLength="158" lengthAdjust="spacingAndGlyphs">MOTOR IN ACCORDANCE WITH I.R. spec. CPS-4</text>
<text x="748" y="493.5" fill="#ffff00" font-family="Liberation Sans" font-size="8" text-anchor="start" textLength="63" lengthAdjust="spacingAndGlyphs">Spec. N° 8814 SP</text>
<text x="748" y="505.5" fill="#ffff00" font-family="Liberation Sans" font-size="8" text-anchor="start" textLength="147" lengthAdjust="spacingAndGlyphs">MOTOR AUSFURUNG NACH I.R. spec. CPS-4</text>
<text x="748" y="514.5" fill="#ffff00" font-family="Liberation Sans" font-size="8" text-anchor="start" textLength="63" lengthAdjust="spacingAndGlyphs">Spec. N° 8814 SP</text>
<line x1="683" y1="546.5" x2="1361" y2="546.5" stroke="#00ffff" stroke-width="1"/>
<line x1="683.5" y1="547" x2="683.5" y2="612" stroke="#ffff00" stroke-width="2"/>
<line x1="684" y1="559.5" x2="907" y2="559.5" stroke="#00ff00" stroke-width="1"/>
<line x1="684" y1="572.5" x2="907" y2="572.5" stroke="#00ff00" stroke-width="1"/>
<line x1="684" y1="585.5" x2="907" y2="585.5" stroke="#00ff00" stroke-width="1"/>
<line x1="684" y1="598.5" x2="907" y2="598.5" stroke="#00ff00" stroke-width="1"/>
<line x1="760.5" y1="547" x2="760.5" y2="612" stroke="#00ff00" stroke-width="1"/>
<line x1="831.5" y1="547" x2="831.5" y2="612" stroke="#00ff00" stroke-width="1"/>
<text x="686" y="551.5" fill="#00ffff" font-family="Liberation Sans" font-size="4.5" text-anchor="start" textLength="18" lengthAdjust="spacingAndGlyphs">Prepared</text>
<text x="686" y="564.5" fill="#00ffff" font-family="Liberation Sans" font-size="4.5" text-anchor="start" textLength="18" lengthAdjust="spacingAndGlyphs">Reviewed</text>
<text x="686" y="577.5" fill="#00ffff" font-family="Liberation Sans" font-size="4.5" text-anchor="start" textLength="18" lengthAdjust="spacingAndGlyphs">Approved</text>
<text x="686" y="558" fill="#00ff00" font-family="Liberation Sans" font-size="8" text-anchor="start" textLength="44" lengthAdjust="spacingAndGlyphs">97-07-25 MAGNI</text>
<text x="686" y="584" fill="#00ff00" font-family="Liberation Sans" font-size="8" text-anchor="start" textLength="47" lengthAdjust="spacingAndGlyphs">97-07-25 CAPUZZI</text>
<line x1="713" y1="568" x2="740" y2="564" stroke="#00ffff" stroke-width="1"/>
<text x="763" y="551" fill="#00ffff" font-family="Liberation Sans" font-size="4" text-anchor="start" textLength="28" lengthAdjust="spacingAndGlyphs">Substitute for</text>
<text x="763" y="557" fill="#00ffff" font-family="Liberation Sans" font-size="4" text-anchor="start" textLength="30" lengthAdjust="spacingAndGlyphs">with separate file</text>
<text x="807" y="557.5" fill="#00ff00" font-family="Liberation Sans" font-size="12" text-anchor="middle" textLength="6" lengthAdjust="spacingAndGlyphs">8</text>
<text x="763" y="565" fill="#00ffff" font-family="Liberation Sans" font-size="4.5" text-anchor="start" textLength="48" lengthAdjust="spacingAndGlyphs">Responsible department</text>
<text x="764" y="571" fill="#00ff00" font-family="Liberation Sans" font-size="8" text-anchor="start" textLength="17" lengthAdjust="spacingAndGlyphs">DMP8</text>
<text x="763" y="577" fill="#00ffff" font-family="Liberation Sans" font-size="4.5" text-anchor="start" textLength="23" lengthAdjust="spacingAndGlyphs">Original date</text>
<text x="763" y="590" fill="#00ffff" font-family="Liberation Sans" font-size="4.5" text-anchor="start" textLength="15" lengthAdjust="spacingAndGlyphs">Check no</text>
<text x="764" y="596" fill="#00ff00" font-family="Liberation Sans" font-size="8" text-anchor="start" textLength="24" lengthAdjust="spacingAndGlyphs">NA09208</text>
<line x1="764.5" y1="570" x2="764.5" y2="612" stroke="#00ff00" stroke-width="1"/>
<line x1="764.5" y1="612" x2="764.5" y2="626" stroke="#ff00ff" stroke-width="1"/>
<rect x="761.5" y="608.5" width="7" height="7" stroke="#ffffff" stroke-width="1" fill="none"/>
<text x="833" y="551" fill="#00ffff" font-family="Liberation Sans" font-size="4.5" text-anchor="start" textLength="8" lengthAdjust="spacingAndGlyphs">Title</text>
<text x="855" y="571" fill="#00ff00" font-family="Liberation Sans" font-size="8.5" text-anchor="start" textLength="60" lengthAdjust="spacingAndGlyphs">OUTLINE - MASS</text>
<text x="833" y="590" fill="#00ffff" font-family="Liberation Sans" font-size="4.5" text-anchor="start" textLength="8" lengthAdjust="spacingAndGlyphs">Type</text>
<text x="857" y="594" fill="#00ff00" font-family="Liberation Sans" font-size="8.5" text-anchor="start" textLength="55" lengthAdjust="spacingAndGlyphs">AMA 450L2 LM</text>
<text x="833" y="603" fill="#00ffff" font-family="Liberation Sans" font-size="4.5" text-anchor="start" textLength="23" lengthAdjust="spacingAndGlyphs">Document no.</text>
<text x="858" y="609.5" fill="#ffff00" font-family="Liberation Sans" font-size="11" text-anchor="start" textLength="60" lengthAdjust="spacingAndGlyphs">UM 3124631</text>
<text x="686" y="609.5" fill="#ff0000" font-family="Liberation Sans" font-weight="bold" font-size="12" text-anchor="start" textLength="25" lengthAdjust="spacingAndGlyphs">ABB</text>
<text x="713" y="610" fill="#ff0000" font-family="Liberation Sans" font-size="5.5" text-anchor="start" textLength="39" lengthAdjust="spacingAndGlyphs">ABB industria</text>
</g></svg>
<!-- ===== DROPDOWN ===== -->
<div class="a" style="left:907px;top:0;width:135px;height:731px;background:#f9f9f9;border:1px solid #8c8c8c;border-radius:3px"></div>
<div class="a" style="left:908px;top:2px;width:26px;height:709px;background:#d8d8d8"></div>
<div class="a" style="left:911px;top:4px;width:20px;height:20px;background:#9edcfc;border:1px solid #3d9ee8;border-radius:2px"></div>
<svg style="left:914px;top:7px" width="14" height="14" viewBox="0 0 14 14"><path d="M2 7 L6 12 L12 1" stroke="#223" stroke-width="1.6" fill="none"/></svg>
<div class="t" style="left:940px;top:9px;font-size:11.3px;color:#111">1:1</div>
<div class="t" style="left:940px;top:31px;font-size:11.3px;color:#111">1:2</div>
<div class="t" style="left:940px;top:53px;font-size:11.3px;color:#111">1:4</div>
<div class="t" style="left:940px;top:75px;font-size:11.3px;color:#111">1:5</div>
<div class="t" style="left:940px;top:97px;font-size:11.3px;color:#111">1:8</div>
<div class="t" style="left:940px;top:119px;font-size:11.3px;color:#111">1:10</div>
<div class="t" style="left:940px;top:141px;font-size:11.3px;color:#111">1:16</div>
<div class="t" style="left:940px;top:163px;font-size:11.3px;color:#111">1:20</div>
<div class="t" style="left:940px;top:185px;font-size:11.3px;color:#111">1:30</div>
<div class="t" style="left:940px;top:207px;font-size:11.3px;color:#111">1:40</div>
<div class="t" style="left:940px;top:229px;font-size:11.3px;color:#111">1:50</div>
<div class="t" style="left:940px;top:251px;font-size:11.3px;color:#111">1:100</div>
<div class="t" style="left:940px;top:273px;font-size:11.3px;color:#111">2:1</div>
<div class="t" style="left:940px;top:295px;font-size:11.3px;color:#111">4:1</div>
<div class="t" style="left:940px;top:317px;font-size:11.3px;color:#111">8:1</div>
<div class="t" style="left:940px;top:339px;font-size:11.3px;color:#111">10:1</div>
<div class="t" style="left:940px;top:361px;font-size:11.3px;color:#111">100:1</div>
<div class="t" style="left:940px;top:383px;font-size:11.3px;color:#111">1/128&quot; = 1'-0&quot;</div>
<div class="t" style="left:940px;top:405px;font-size:11.3px;color:#111">1/64&quot; = 1'-0&quot;</div>
<div class="t" style="left:940px;top:427px;font-size:11.3px;color:#111">1/32&quot; = 1'-0&quot;</div>
<div class="t" style="left:940px;top:449px;font-size:11.3px;color:#111">1/16&quot; = 1'-0&quot;</div>
<div class="t" style="left:940px;top:471px;font-size:11.3px;color:#111">3/32&quot; = 1'-0&quot;</div>
<div class="t" style="left:940px;top:493px;font-size:11.3px;color:#111">1/8&quot; = 1'-0&quot;</div>
<div class="t" style="left:940px;top:515px;font-size:11.3px;color:#111">3/16&quot; = 1'-0&quot;</div>
<div class="t" style="left:940px;top:537px;font-size:11.3px;color:#111">1/4&quot; = 1'-0&quot;</div>
<div class="t" style="left:940px;top:559px;font-size:11.3px;color:#111">3/8&quot; = 1'-0&quot;</div>
<div class="t" style="left:940px;top:581px;font-size:11.3px;color:#111">1/2&quot; = 1'-0&quot;</div>
<div class="t" style="left:940px;top:603px;font-size:11.3px;color:#111">3/4&quot; = 1'-0&quot;</div>
<div class="t" style="left:940px;top:625px;font-size:11.3px;color:#111">1&quot; = 1'-0&quot;</div>
<div class="t" style="left:940px;top:647px;font-size:11.3px;color:#111">1-1/2&quot; = 1'-0&quot;</div>
<div class="t" style="left:940px;top:669px;font-size:11.3px;color:#111">3&quot; = 1'-0&quot;</div>
<div class="t" style="left:940px;top:691px;font-size:11.3px;color:#111">6&quot; = 1'-0&quot;</div>
<!-- tooltip -->
<div class="a" style="left:907px;top:713px;width:112px;height:20px;background:rgba(0,0,0,.18);filter:blur(1px)"></div>
<div class="a" style="left:905px;top:711px;width:112px;height:20px;background:#fff;border:1px solid #767676"></div>
<div class="t" style="left:911px;top:715px;font-size:11.6px;color:#333">Lista skal adnotacji</div>
</body></html>
